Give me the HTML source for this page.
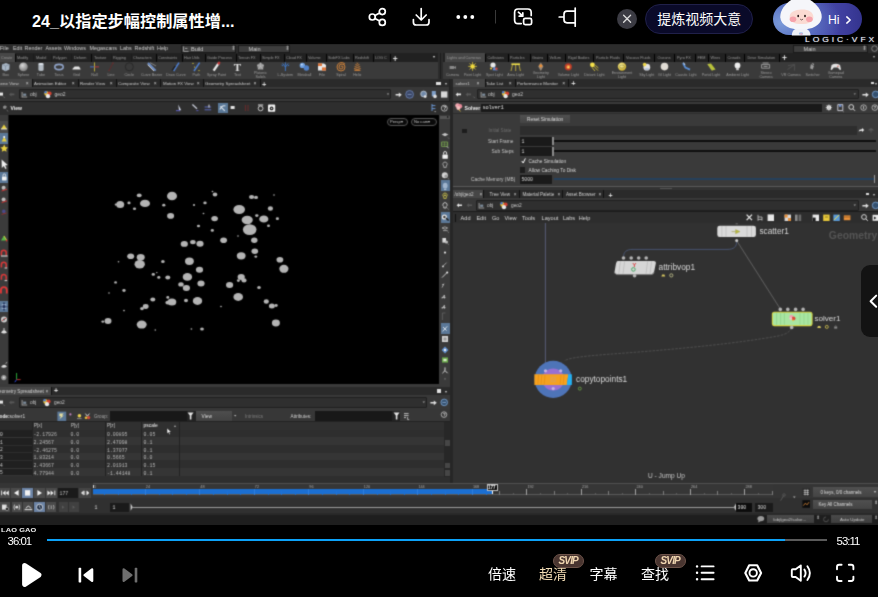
<!DOCTYPE html><html lang="zh"><head><meta charset="utf-8"><title>player</title><style>
*{margin:0;padding:0;box-sizing:border-box}
html,body{width:878px;height:597px;overflow:hidden;background:#000;font-family:"Liberation Sans","Noto Sans CJK SC",sans-serif;}
.a{position:absolute}
#root{position:relative;width:878px;height:597px;background:#000;overflow:hidden}
.t{position:absolute;white-space:nowrap;line-height:1}
#h{position:absolute;left:0;top:0;width:878px;height:525px;overflow:hidden;filter:url(#vb)}
#h .t{color:#bdbdbd;font-size:5.2px}
svg{position:absolute;overflow:visible;left:0;top:0}
.m{font-family:"Liberation Mono",monospace}
</style></head><body><div id="root">
<svg width="0" height="0" style="position:absolute"><defs><filter id="vb" x="0" y="0" width="1" height="1" color-interpolation-filters="sRGB"><feConvolveMatrix order="3" kernelMatrix="0.0277 0.1110 0.0277 0.1110 0.4452 0.1110 0.0277 0.1110 0.0277" edgeMode="duplicate" preserveAlpha="true"/></filter></defs></svg>
<div id="h">
<div class="a" style="left:0px;top:44px;width:878px;height:481px;background:#222;"></div>
<div class="a" style="left:0px;top:44px;width:878px;height:9.2px;background:#2c2c2c;"></div>
<div class="t" style="left:0px;top:45.97px;font-size:5.4px;color:#cccccc;">File</div>
<div class="t" style="left:13px;top:45.97px;font-size:5.4px;color:#cccccc;">Edit</div>
<div class="t" style="left:24.5px;top:45.97px;font-size:5.4px;color:#cccccc;">Render</div>
<div class="t" style="left:45.5px;top:45.97px;font-size:5.4px;color:#cccccc;">Assets</div>
<div class="t" style="left:64px;top:45.97px;font-size:5.4px;color:#cccccc;">Windows</div>
<div class="t" style="left:89.5px;top:45.97px;font-size:5.4px;color:#cccccc;">Megascans</div>
<div class="t" style="left:120px;top:45.97px;font-size:5.4px;color:#cccccc;">Labs</div>
<div class="t" style="left:134.5px;top:45.97px;font-size:5.4px;color:#cccccc;">Redshift</div>
<div class="t" style="left:157px;top:45.97px;font-size:5.4px;color:#cccccc;">Help</div>
<div class="a" style="left:181px;top:44.6px;width:55px;height:8.2px;background:#3d3d3d;border:0.5px solid #1a1a1a"></div>
<svg width="878" height="100" viewBox="0 0 878 100" fill="none" stroke="#ccc" stroke-width="0.7"><path d="M183.6 46.4 V51.4 H188.6 M185 48.4 H187.4"/><path d="M241 48.8 a2.4 2 0 1 0 4.8 0 a2.4 2 0 1 0 -4.8 0 M242.4 48.8 h2"/><path d="M796 46.6 l1 4 l1.2 -3 l1.2 3 l1 -4"/></svg>
<div class="t" style="left:191px;top:47.04px;font-size:5.6px;color:#cfcfcf;">Build</div>
<div class="t" style="left:231px;top:46.34px;font-size:5.6px;color:#999;">⬍</div>
<div class="a" style="left:237.5px;top:44.6px;width:52px;height:8.2px;background:#3d3d3d;border:0.5px solid #1a1a1a"></div>
<div class="t" style="left:248.5px;top:47.04px;font-size:5.6px;color:#cfcfcf;">Main</div>
<div class="t" style="left:285px;top:46.34px;font-size:5.6px;color:#999;">⬍</div>
<div class="a" style="left:793px;top:44.6px;width:75px;height:8.2px;background:#3d3d3d;border:0.5px solid #1a1a1a"></div>
<div class="t" style="left:803.5px;top:47.04px;font-size:5.6px;color:#cfcfcf;">Main</div>
<div class="t" style="left:862px;top:46.34px;font-size:5.6px;color:#999;">⬍</div>
<svg width="878" height="100" viewBox="0 0 878 100" fill="none" stroke="#bbb" stroke-width="0.6"><circle cx="874.5" cy="48.6" r="2.8"/></svg>
<div class="a" style="left:0px;top:53.2px;width:878px;height:8.4px;background:#212121;"></div>
<div class="a" style="left:0px;top:53.4px;width:14.5px;height:8.2px;background:#474747;"></div>
<div class="t" style="left:1px;top:56.62px;font-size:3.8px;color:#969696;">Create</div>
<div class="t" style="left:17px;top:56.62px;font-size:3.8px;color:#969696;">Modify</div>
<div class="t" style="left:36px;top:56.62px;font-size:3.8px;color:#969696;">Model</div>
<div class="t" style="left:53px;top:56.62px;font-size:3.8px;color:#969696;">Polygon</div>
<div class="t" style="left:74px;top:56.62px;font-size:3.8px;color:#969696;">Deform</div>
<div class="t" style="left:94px;top:56.62px;font-size:3.8px;color:#969696;">Texture</div>
<div class="t" style="left:113px;top:56.62px;font-size:3.8px;color:#969696;">Rigging</div>
<div class="t" style="left:133px;top:56.62px;font-size:3.8px;color:#969696;">Characters</div>
<div class="t" style="left:158px;top:56.62px;font-size:3.8px;color:#969696;">Constraints</div>
<div class="t" style="left:184px;top:56.62px;font-size:3.8px;color:#969696;">Hair Utils</div>
<div class="t" style="left:207px;top:56.62px;font-size:3.8px;color:#969696;">Guide Process</div>
<div class="t" style="left:238px;top:56.62px;font-size:3.8px;color:#969696;">Terrain FX</div>
<div class="t" style="left:262px;top:56.62px;font-size:3.8px;color:#969696;">Simple FX</div>
<div class="t" style="left:286px;top:56.62px;font-size:3.8px;color:#969696;">Cloud FX</div>
<div class="t" style="left:308px;top:56.62px;font-size:3.8px;color:#969696;">Volume</div>
<div class="t" style="left:328px;top:56.62px;font-size:3.8px;color:#969696;">SideFX Labs</div>
<div class="t" style="left:355px;top:56.62px;font-size:3.8px;color:#969696;">Redshift</div>
<div class="t" style="left:375px;top:56.62px;font-size:3.8px;color:#969696;">LOG C</div>
<div class="a" style="left:14.5px;top:53.6px;width:0.7px;height:8px;background:#050505;"></div>
<div class="a" style="left:33px;top:53.6px;width:0.7px;height:8px;background:#1b1b1b;"></div>
<div class="a" style="left:50.5px;top:53.6px;width:0.7px;height:8px;background:#1b1b1b;"></div>
<div class="a" style="left:71px;top:53.6px;width:0.7px;height:8px;background:#1b1b1b;"></div>
<div class="a" style="left:91px;top:53.6px;width:0.7px;height:8px;background:#050505;"></div>
<div class="a" style="left:110.5px;top:53.6px;width:0.7px;height:8px;background:#1b1b1b;"></div>
<div class="a" style="left:130.5px;top:53.6px;width:0.7px;height:8px;background:#1b1b1b;"></div>
<div class="a" style="left:155.5px;top:53.6px;width:0.7px;height:8px;background:#050505;"></div>
<div class="a" style="left:181.5px;top:53.6px;width:0.7px;height:8px;background:#050505;"></div>
<div class="a" style="left:204.5px;top:53.6px;width:0.7px;height:8px;background:#050505;"></div>
<div class="a" style="left:235.5px;top:53.6px;width:0.7px;height:8px;background:#050505;"></div>
<div class="a" style="left:260px;top:53.6px;width:0.7px;height:8px;background:#050505;"></div>
<div class="a" style="left:283.5px;top:53.6px;width:0.7px;height:8px;background:#050505;"></div>
<div class="a" style="left:305.5px;top:53.6px;width:0.7px;height:8px;background:#050505;"></div>
<div class="a" style="left:325.5px;top:53.6px;width:0.7px;height:8px;background:#050505;"></div>
<div class="a" style="left:352.5px;top:53.6px;width:0.7px;height:8px;background:#050505;"></div>
<div class="a" style="left:372.5px;top:53.6px;width:0.7px;height:8px;background:#050505;"></div>
<div class="a" style="left:389.5px;top:53.6px;width:0.7px;height:8px;background:#050505;"></div>
<div class="t" style="left:392.8px;top:54.71px;font-size:8.4px;color:#e0e0e0;font-weight:bold;">+</div>
<div class="t" style="left:432.5px;top:55.39px;font-size:4px;color:#ddd;">▾</div>
<div class="a" style="left:444.5px;top:53.4px;width:40.6px;height:8.2px;background:#474747;"></div>
<div class="t" style="left:447px;top:56.62px;font-size:3.8px;color:#969696;">Lights and Cameras</div>
<div class="t" style="left:487.6px;top:56.62px;font-size:3.8px;color:#969696;">Collisions</div>
<div class="t" style="left:510px;top:56.62px;font-size:3.8px;color:#969696;">Particles</div>
<div class="t" style="left:532px;top:56.62px;font-size:3.8px;color:#969696;">Grains</div>
<div class="t" style="left:549.5px;top:56.62px;font-size:3.8px;color:#969696;">Vellum</div>
<div class="t" style="left:568px;top:56.62px;font-size:3.8px;color:#969696;">Rigid Bodies</div>
<div class="t" style="left:596px;top:56.62px;font-size:3.8px;color:#969696;">Particle Fluids</div>
<div class="t" style="left:626px;top:56.62px;font-size:3.8px;color:#969696;">Viscous Fluids</div>
<div class="t" style="left:657.5px;top:56.62px;font-size:3.8px;color:#969696;">Oceans</div>
<div class="t" style="left:677px;top:56.62px;font-size:3.8px;color:#969696;">Pyro FX</div>
<div class="t" style="left:697.5px;top:56.62px;font-size:3.8px;color:#969696;">FEM</div>
<div class="t" style="left:710.5px;top:56.62px;font-size:3.8px;color:#969696;">Wires</div>
<div class="t" style="left:727.5px;top:56.62px;font-size:3.8px;color:#969696;">Crowds</div>
<div class="t" style="left:747.5px;top:56.62px;font-size:3.8px;color:#969696;">Drive Simulation</div>
<div class="a" style="left:485.2px;top:53.6px;width:0.6px;height:8px;background:#000;"></div>
<div class="a" style="left:507.5px;top:53.6px;width:0.6px;height:8px;background:#000;"></div>
<div class="a" style="left:529.5px;top:53.6px;width:0.6px;height:8px;background:#000;"></div>
<div class="a" style="left:546.5px;top:53.6px;width:0.6px;height:8px;background:#000;"></div>
<div class="a" style="left:565px;top:53.6px;width:0.6px;height:8px;background:#000;"></div>
<div class="a" style="left:593px;top:53.6px;width:0.6px;height:8px;background:#000;"></div>
<div class="a" style="left:623px;top:53.6px;width:0.6px;height:8px;background:#000;"></div>
<div class="a" style="left:654px;top:53.6px;width:0.6px;height:8px;background:#000;"></div>
<div class="a" style="left:674px;top:53.6px;width:0.6px;height:8px;background:#000;"></div>
<div class="a" style="left:694.5px;top:53.6px;width:0.6px;height:8px;background:#000;"></div>
<div class="a" style="left:707.5px;top:53.6px;width:0.6px;height:8px;background:#000;"></div>
<div class="a" style="left:724.5px;top:53.6px;width:0.6px;height:8px;background:#000;"></div>
<div class="a" style="left:744px;top:53.6px;width:0.6px;height:8px;background:#000;"></div>
<div class="a" style="left:778.5px;top:53.6px;width:0.6px;height:8px;background:#000;"></div>
<div class="t" style="left:782px;top:54.31px;font-size:8.4px;color:#e0e0e0;font-weight:bold;">+</div>
<div class="t" style="left:873px;top:55.39px;font-size:4px;color:#bbb;">▾</div>
<div class="a" style="left:0px;top:61.6px;width:878px;height:17.6px;background:#3a3a3a;"></div>
<div class="a" style="left:438.4px;top:53.2px;width:5px;height:26px;background:#2c2c2c;"></div>
<div class="a" style="left:440.4px;top:53.2px;width:1px;height:26px;background:#1c1c1c;"></div>
<div class="t" style="left:-24.4px;top:74.4px;width:60px;text-align:center;font-size:3.7px;color:#9c9c9c;line-height:3.7px;white-space:normal">Box</div>
<div class="t" style="left:-6.600000000000001px;top:74.4px;width:60px;text-align:center;font-size:3.7px;color:#9c9c9c;line-height:3.7px;white-space:normal">Sphere</div>
<div class="t" style="left:11px;top:74.4px;width:60px;text-align:center;font-size:3.7px;color:#9c9c9c;line-height:3.7px;white-space:normal">Tube</div>
<div class="t" style="left:29px;top:74.4px;width:60px;text-align:center;font-size:3.7px;color:#9c9c9c;line-height:3.7px;white-space:normal">Torus</div>
<div class="t" style="left:46.400000000000006px;top:74.4px;width:60px;text-align:center;font-size:3.7px;color:#9c9c9c;line-height:3.7px;white-space:normal">Grid</div>
<div class="t" style="left:64.5px;top:74.4px;width:60px;text-align:center;font-size:3.7px;color:#9c9c9c;line-height:3.7px;white-space:normal">Null</div>
<div class="t" style="left:81px;top:74.4px;width:60px;text-align:center;font-size:3.7px;color:#9c9c9c;line-height:3.7px;white-space:normal">Line</div>
<div class="t" style="left:99.30000000000001px;top:74.4px;width:60px;text-align:center;font-size:3.7px;color:#9c9c9c;line-height:3.7px;white-space:normal">Circle</div>
<div class="t" style="left:121.6px;top:74.4px;width:60px;text-align:center;font-size:3.7px;color:#9c9c9c;line-height:3.7px;white-space:normal">Curve Bezier</div>
<div class="t" style="left:146px;top:74.4px;width:60px;text-align:center;font-size:3.7px;color:#9c9c9c;line-height:3.7px;white-space:normal">Draw Curve</div>
<div class="t" style="left:166.4px;top:74.4px;width:60px;text-align:center;font-size:3.7px;color:#9c9c9c;line-height:3.7px;white-space:normal">Path</div>
<div class="t" style="left:186.6px;top:74.4px;width:60px;text-align:center;font-size:3.7px;color:#9c9c9c;line-height:3.7px;white-space:normal">Spray Paint</div>
<div class="t" style="left:207.4px;top:74.4px;width:60px;text-align:center;font-size:3.7px;color:#9c9c9c;line-height:3.7px;white-space:normal">Text</div>
<div class="t" style="left:230.5px;top:72.4px;width:60px;text-align:center;font-size:3.7px;color:#9c9c9c;line-height:3.7px;white-space:normal">Platonic<br>Solids</div>
<div class="t" style="left:255.39999999999998px;top:74.4px;width:60px;text-align:center;font-size:3.7px;color:#9c9c9c;line-height:3.7px;white-space:normal">L-System</div>
<div class="t" style="left:274.4px;top:74.4px;width:60px;text-align:center;font-size:3.7px;color:#9c9c9c;line-height:3.7px;white-space:normal">Metaball</div>
<div class="t" style="left:292px;top:74.4px;width:60px;text-align:center;font-size:3.7px;color:#9c9c9c;line-height:3.7px;white-space:normal">File</div>
<div class="t" style="left:311px;top:74.4px;width:60px;text-align:center;font-size:3.7px;color:#9c9c9c;line-height:3.7px;white-space:normal">Spiral</div>
<div class="t" style="left:327.3px;top:74.4px;width:60px;text-align:center;font-size:3.7px;color:#9c9c9c;line-height:3.7px;white-space:normal">Helix</div>
<div class="t" style="left:422.5px;top:74.4px;width:60px;text-align:center;font-size:3.7px;color:#9c9c9c;line-height:3.7px;white-space:normal">Camera</div>
<div class="t" style="left:442.6px;top:74.4px;width:60px;text-align:center;font-size:3.7px;color:#9c9c9c;line-height:3.7px;white-space:normal">Point Light</div>
<div class="t" style="left:464.4px;top:74.4px;width:60px;text-align:center;font-size:3.7px;color:#9c9c9c;line-height:3.7px;white-space:normal">Spot Light</div>
<div class="t" style="left:485.70000000000005px;top:74.4px;width:60px;text-align:center;font-size:3.7px;color:#9c9c9c;line-height:3.7px;white-space:normal">Area Light</div>
<div class="t" style="left:510.79999999999995px;top:72.4px;width:60px;text-align:center;font-size:3.7px;color:#9c9c9c;line-height:3.7px;white-space:normal">Geometry<br>Light</div>
<div class="t" style="left:538.3px;top:74.4px;width:60px;text-align:center;font-size:3.7px;color:#9c9c9c;line-height:3.7px;white-space:normal">Volume Light</div>
<div class="t" style="left:564.4px;top:74.4px;width:60px;text-align:center;font-size:3.7px;color:#9c9c9c;line-height:3.7px;white-space:normal">Distant Light</div>
<div class="t" style="left:592px;top:72.4px;width:60px;text-align:center;font-size:3.7px;color:#9c9c9c;line-height:3.7px;white-space:normal">Environment<br>Light</div>
<div class="t" style="left:616.8px;top:74.4px;width:60px;text-align:center;font-size:3.7px;color:#9c9c9c;line-height:3.7px;white-space:normal">Sky Light</div>
<div class="t" style="left:634.5px;top:74.4px;width:60px;text-align:center;font-size:3.7px;color:#9c9c9c;line-height:3.7px;white-space:normal">GI Light</div>
<div class="t" style="left:656px;top:74.4px;width:60px;text-align:center;font-size:3.7px;color:#9c9c9c;line-height:3.7px;white-space:normal">Caustic Light</div>
<div class="t" style="left:681px;top:74.4px;width:60px;text-align:center;font-size:3.7px;color:#9c9c9c;line-height:3.7px;white-space:normal">Portal Light</div>
<div class="t" style="left:707.5px;top:74.4px;width:60px;text-align:center;font-size:3.7px;color:#9c9c9c;line-height:3.7px;white-space:normal">Ambient Light</div>
<div class="t" style="left:736px;top:72.4px;width:60px;text-align:center;font-size:3.7px;color:#9c9c9c;line-height:3.7px;white-space:normal">Stereo<br>Camera</div>
<div class="t" style="left:761px;top:74.4px;width:60px;text-align:center;font-size:3.7px;color:#9c9c9c;line-height:3.7px;white-space:normal">VR Camera</div>
<div class="t" style="left:782.7px;top:74.4px;width:60px;text-align:center;font-size:3.7px;color:#9c9c9c;line-height:3.7px;white-space:normal">Switcher</div>
<div class="t" style="left:805.8px;top:72.4px;width:60px;text-align:center;font-size:3.7px;color:#9c9c9c;line-height:3.7px;white-space:normal">Gamepad<br>Camera</div>
<svg width="878" height="100" viewBox="0 0 878 100">
<defs><radialGradient id="sph" cx="0.4" cy="0.35" r="0.7"><stop offset="0" stop-color="#d8d8d8"/><stop offset="1" stop-color="#777"/></radialGradient>
<radialGradient id="ysph" cx="0.4" cy="0.35" r="0.7"><stop offset="0" stop-color="#fff6a0"/><stop offset="1" stop-color="#c8a820"/></radialGradient></defs>
<path d="M2 64.4 L6 63 L9.6 64.6 L9.4 69.4 L5.4 71.2 L1.8 69.2 Z" fill="#a9b7c6"/><path d="M2 64.4 L5.6 66 L9.6 64.6 M5.6 66 L5.4 71.2" stroke="#6e7c8c" stroke-width="0.5" fill="none"/>
<circle cx="23.4" cy="66.8" r="4.4" fill="url(#sph)"/>
<path d="M38.4 64 a2.6 1 0 0 1 5.2 0 V70 a2.6 1 0 0 1 -5.2 0 Z" fill="#b4bcc4"/><ellipse cx="41" cy="64" rx="2.6" ry="1" fill="#dde3ea"/>
<ellipse cx="59" cy="67" rx="4.2" ry="2.6" fill="none" stroke="#8fa3c8" stroke-width="1.6"/>
<path d="M72.4 69 L74.6 66.6 H79 L80.6 69 Z" fill="#e6e6e6"/><rect x="72.4" y="69" width="8.2" height="0.9" fill="#999"/>
<path d="M94.5 62.4 V71.4" stroke="#d8c83a" stroke-width="0.8"/><path d="M90 66.9 H94.5" stroke="#4a78d0" stroke-width="0.9"/><path d="M94.5 66.9 H99" stroke="#c83a3a" stroke-width="0.9"/>
<path d="M109 70.6 L113 63" stroke="#6a2626" stroke-width="0.8"/><circle cx="109" cy="70.6" r="0.7" fill="#743030"/><circle cx="113" cy="63" r="0.7" fill="#743030"/>
<circle cx="129.3" cy="66.8" r="4" fill="none" stroke="#242424" stroke-width="0.8"/>
<path d="M148 63 L155.6 70.6" stroke="#6f8fc8" stroke-width="2"/><path d="M147.6 64.6 L154 71" stroke="#e8e8e8" stroke-width="0.9"/><path d="M150 62.6 L156 66" stroke="#ccc" stroke-width="0.5"/>
<path d="M173.6 71 L179 62.6" stroke="#4f7fd0" stroke-width="1.5"/><path d="M172.2 70.4 L175.2 66" stroke="#1a1a1a" stroke-width="1.3"/>
<path d="M194 71 L199.6 62.6" stroke="#4f7fd0" stroke-width="1.5"/><circle cx="193" cy="63.4" r="0.6" fill="#e8d83a"/><circle cx="194.6" cy="67" r="0.6" fill="#e8d83a"/><circle cx="199" cy="70.6" r="0.6" fill="#e8d83a"/>
<path d="M213.6 70.6 L218.6 63.4" stroke="#e8e8e8" stroke-width="2.4"/><path d="M218 64.2 L219.8 62" stroke="#c83a3a" stroke-width="2.2"/>
<text x="237.4" y="71.2" font-family="Liberation Serif,serif" font-size="11" font-weight="bold" fill="#e6e6e6" text-anchor="middle">T</text>
<path d="M260.5 62.6 L264 65 L263 69.4 L258 69.4 L257 65 Z" fill="#9a9a9a"/><path d="M260.5 62.6 L260.5 66.4 L263 69.4 M260.5 66.4 L258 69.4 M257 65 L260.5 66.4 L264 65" stroke="#ccc" stroke-width="0.4" fill="none"/>
<path d="M285.4 71 V66 M285.4 67 L282.6 63.4 M285.4 67 L288.2 63.4 M285.4 65.6 V62.4 M283 66 L281.6 65 M287.8 66 L289.2 65" stroke="#3f7fd8" stroke-width="0.9" fill="none"/>
<circle cx="302.4" cy="65.4" r="2.7" fill="#6fa0e0"/><circle cx="306.4" cy="68" r="2.7" fill="#4f80c8"/><circle cx="301.8" cy="64.6" r="0.9" fill="#cfe0f8"/>
<path d="M318 63.4 H324 L326 65 V70.6 H318 Z" fill="#e8e8e8"/><path d="M318 63.4 H322 V66 H318 Z" fill="#e0763a"/><path d="M322 67.4 H326 V70.6 H322Z" fill="#e0763a"/>
<path d="M341 67 a1 1 0 0 1 2 0 a2 2 0 0 1 -4 0 a3 3 0 0 1 6 0 a4 4 0 0 1 -8 0 a4.6 4.6 0 0 1 8 -3" stroke="#e08a3a" stroke-width="0.9" fill="none"/>
<path d="M354.4 70.4 h6 M354 68.6 q3.4 1.6 6.6 0 M354.6 66.6 q2.8 1.6 5.6 0 M355.4 64.6 q2 1.4 4 0 M356.6 63 q0.8 0.8 1.6 0" stroke="#e08a3a" stroke-width="0.9" fill="none"/>
<!-- right shelf -->
<path d="M449.6 66 h4.4 v3 h-4.4z M454 67 l2 -1 v3 l-2 -1z" fill="#8a8a8a"/>
<circle cx="472.6" cy="66.4" r="2.2" fill="#f6e24a"/><path d="M472.6 62 V70.8 M468.2 66.4 H477 M469.5 63.3 L475.7 69.5 M475.7 63.3 L469.5 69.5" stroke="#f0d83a" stroke-width="0.7"/>
<circle cx="493" cy="65" r="2.6" fill="#e8e8e8"/><path d="M494.4 66.4 L497.8 70.6 L492.4 70.2 Z" fill="#5a8ad8"/><circle cx="496.4" cy="68.8" r="1.2" fill="#d04a3a"/><circle cx="491" cy="68.6" r="1" fill="#f0c83a"/>
<path d="M511.4 63.4 H520 V65 H511.4 Z" fill="#f0e04a"/><path d="M512.4 65 L511 71 M515.7 65 V71 M519 65 L520.4 71" stroke="#e8d040" stroke-width="0.7"/>
<path d="M540.8 62.4 L543.4 66.6 L540.8 71 L538.2 66.6 Z" fill="#9a8a7a"/><circle cx="540.8" cy="65.8" r="1.6" fill="#e8903a"/>
<circle cx="568.3" cy="66.8" r="3.6" fill="#b83a2a"/><circle cx="568.3" cy="67" r="2" fill="#f08a3a"/><circle cx="568.3" cy="67.2" r="0.9" fill="#f8e06a"/>
<circle cx="592.4" cy="64.8" r="2.4" fill="#f6e24a"/><path d="M593.6 66 L598 70.6 M592 67.4 L595 71 M595.4 65.4 L598.4 68" stroke="#f0d83a" stroke-width="0.8"/>
<circle cx="622" cy="66.6" r="4.2" fill="url(#ysph)"/><ellipse cx="622" cy="66.6" rx="2.6" ry="1.6" fill="none" stroke="#6a6a3a" stroke-width="0.5"/>
<circle cx="646.8" cy="67.2" r="3.4" fill="#e4e4e4"/><circle cx="644.6" cy="64.6" r="1.8" fill="#f0d84a"/><path d="M645 69 h4" stroke="#7a9ad0" stroke-width="0.8"/>
<circle cx="664.5" cy="66.6" r="3.8" fill="#e0dcd4"/>
<path d="M683 63 L685.4 67.6 L690 69.6" stroke="#5a90d8" stroke-width="1.8" fill="none"/><path d="M683.6 62.6 l1.4 2.4" stroke="#d8e4f4" stroke-width="0.9"/>
<path d="M707.6 64 L711 63.4 L715.6 69.6 L712 70.6 Z" fill="#b8c23a"/><path d="M707.6 64 L712 70.6" stroke="#e0e05a" stroke-width="0.5"/>
<circle cx="737.5" cy="65.4" r="2.9" fill="#eeeeee"/><path d="M736.2 67.6 h2.6 v2.6 h-2.6z" fill="#cfcfcf"/>
<path d="M761.6 64.6 h8 v3.6 h-8z" fill="none" stroke="#bdbdbd" stroke-width="0.7"/><path d="M762.6 63 h6 M763.6 66.4 h4" stroke="#ddd" stroke-width="0.6"/>
<path d="M787.4 69.6 L794.6 64.6 L794.6 70.6 M788 65.6 L794.6 64.6" stroke="#565656" stroke-width="0.8" fill="none"/>
<path d="M811 64 l3 2 l-1.4 3.6 l-2.6 -1.4 z" fill="#9a9a9a"/><path d="M812.6 63 l1 2" stroke="#ddd" stroke-width="0.7"/>
<path d="M831.6 65 q4.2 -2.6 8.4 0 l1 4.6 q-1 0.8 -2 -0.6 l-1.2 -1.4 h-4 l-1.2 1.4 q-1 1.4 -2 0.6 z" fill="#e4e4e4"/><circle cx="838" cy="66.2" r="0.7" fill="#d04a3a"/>
</svg>
<div class="a" style="left:0px;top:79.2px;width:449.4px;height:8.2px;background:#2a2a2a;"></div>
<div class="a" style="left:0px;top:79.4px;width:31.5px;height:8px;background:#464646;"></div>
<div class="t" style="left:-4.5px;top:81.92px;font-size:4.4px;color:#cccccc;">Scene View</div>
<div class="t" style="left:25.8px;top:81.03px;font-size:5px;color:#ccc;">×</div>
<div class="t" style="left:34px;top:81.92px;font-size:4.4px;color:#cccccc;">Animation Editor</div>
<div class="t" style="left:71.8px;top:81.03px;font-size:5px;color:#ccc;">×</div>
<div class="t" style="left:80px;top:81.92px;font-size:4.4px;color:#cccccc;">Render View</div>
<div class="t" style="left:109.8px;top:81.03px;font-size:5px;color:#ccc;">×</div>
<div class="t" style="left:118px;top:81.92px;font-size:4.4px;color:#cccccc;">Composite View</div>
<div class="t" style="left:153.8px;top:81.03px;font-size:5px;color:#ccc;">×</div>
<div class="t" style="left:163px;top:81.92px;font-size:4.4px;color:#cccccc;">Motion FX View</div>
<div class="t" style="left:196.8px;top:81.03px;font-size:5px;color:#ccc;">×</div>
<div class="t" style="left:205px;top:81.92px;font-size:4.4px;color:#cccccc;">Geometry Spreadsheet</div>
<div class="t" style="left:253.60000000000002px;top:81.03px;font-size:5px;color:#ccc;">×</div>
<div class="a" style="left:31.5px;top:79.4px;width:0.7px;height:8px;background:#111;"></div>
<div class="a" style="left:77.5px;top:79.4px;width:0.7px;height:8px;background:#111;"></div>
<div class="a" style="left:115.5px;top:79.4px;width:0.7px;height:8px;background:#111;"></div>
<div class="a" style="left:160px;top:79.4px;width:0.7px;height:8px;background:#111;"></div>
<div class="a" style="left:202.5px;top:79.4px;width:0.7px;height:8px;background:#111;"></div>
<div class="a" style="left:259.6px;top:79.4px;width:0.7px;height:8px;background:#111;"></div>
<div class="t" style="left:262px;top:81.06px;font-size:7.4px;color:#ddd;font-weight:bold;">+</div>
<div class="a" style="left:436.2px;top:82px;width:4.6px;height:3px;background:#e0e0e0;"></div>
<div class="t" style="left:444.6px;top:81.79px;font-size:4px;color:#ccc;">▾</div>
<div class="a" style="left:452px;top:79.2px;width:426px;height:8.2px;background:#2a2a2a;"></div>
<div class="a" style="left:453px;top:79.4px;width:31.6px;height:8px;background:#464646;"></div>
<div class="t" style="left:455.5px;top:81.92px;font-size:4.4px;color:#cccccc;">solver1</div>
<div class="t" style="left:476.40000000000003px;top:81.03px;font-size:5px;color:#ccc;">×</div>
<div class="t" style="left:486px;top:81.92px;font-size:4.4px;color:#cccccc;">Take List</div>
<div class="t" style="left:508.8px;top:81.03px;font-size:5px;color:#ccc;">×</div>
<div class="t" style="left:517px;top:81.92px;font-size:4.4px;color:#cccccc;">Performance Monitor</div>
<div class="t" style="left:562.3px;top:81.03px;font-size:5px;color:#ccc;">×</div>
<div class="a" style="left:484.6px;top:79.4px;width:0.7px;height:8px;background:#111;"></div>
<div class="a" style="left:514.6px;top:79.4px;width:0.7px;height:8px;background:#111;"></div>
<div class="a" style="left:568px;top:79.4px;width:0.7px;height:8px;background:#111;"></div>
<div class="t" style="left:571.2px;top:80.46px;font-size:7.4px;color:#ddd;font-weight:bold;">+</div>
<div class="a" style="left:870.6px;top:81.6px;width:3.4px;height:2.6px;background:#ddd;"></div>
<div class="t" style="left:875px;top:81.79px;font-size:4px;color:#ccc;">▾</div>
<div class="a" style="left:0px;top:87.4px;width:449.4px;height:13.8px;background:#383838;"></div>
<div class="a" style="left:452px;top:87.4px;width:426px;height:13.8px;background:#383838;"></div>
<div class="a" style="left:449.4px;top:79.2px;width:2.6px;height:22px;background:#222;"></div>
<div class="a" style="left:19px;top:89.2px;width:372px;height:10.2px;background:#2f2f2f;border:0.6px solid #1f1f1f;border-radius:1px"></div>
<div class="a" style="left:477px;top:89.2px;width:382px;height:10.2px;background:#2f2f2f;border:0.6px solid #1f1f1f;border-radius:1px"></div>
<svg width="878" height="110" viewBox="0 0 878 110">
<path d="M0 92.6 h3 v3 h-3z" fill="#e8e8e8"/><path d="M3.4 96.6 l1 1" stroke="#ccc" stroke-width="0.5"/>
<path d="M9 94.4 l2.4 -2 v1.2 h3 v1.6 h-3 v1.2z" fill="#585858"/>
<path d="M21.6 92 h1 v4.4 h4.6 v1 h-5.6z" fill="#9a9a9a"/><rect x="23.2" y="93.6" width="3" height="2.2" fill="#7f8f9f"/>
<circle cx="46.6" cy="93.6" r="2.3" fill="#e8c03a"/><circle cx="49.6" cy="93.4" r="2" fill="#d04030"/><circle cx="48" cy="96.2" r="2.1" fill="#e8e8e8"/><circle cx="45.6" cy="92.2" r="1.2" fill="#4a7ad0"/>
<path d="M386.8 93.6 l1.2 1.4 l1.2 -1.4z" fill="#aaa"/>
<path d="M395.6 94 h3.2 v-1.6 l3 2.4 l-3 2.4 v-1.6 h-3.2z" fill="#e0e0e0"/>
<circle cx="409.6" cy="94.4" r="3.9" fill="#3a4666" stroke="#6f86b8" stroke-width="0.8"/><path d="M407.6 94.4 h4" stroke="#8fa6d0" stroke-width="0.7"/>
<circle cx="423.6" cy="94" r="2.9" fill="#6f88a8" stroke="#cfd8e4" stroke-width="0.7"/><circle cx="425.2" cy="96.6" r="1.4" fill="#e8e8e8"/>
<rect x="431.8" y="91" width="4" height="5.4" fill="#7f9fc8"/><circle cx="435" cy="96.4" r="1.8" fill="#e0e0e0"/>
<!-- right path bar -->
<rect x="441" y="91.4" width="6.4" height="6.2" fill="#d8d8d8"/>
<path d="M455.6 94.4 l2.4 -2 v1.2 h3 v1.6 h-3 v1.2z" fill="#e8e8e8"/><path d="M465.6 94.4 l2.4 -2 v1.2 h3 v1.6 h-3 v1.2z" fill="#585858"/>
<path d="M473.6 96.8 l0.8 0.8" stroke="#ccc" stroke-width="0.5"/>
<path d="M480.6 92 h1 v4.4 h4.6 v1 h-5.6z" fill="#9a9a9a"/><rect x="482.2" y="93.6" width="3" height="2.2" fill="#7f8f9f"/>
<circle cx="504.2" cy="93.6" r="2.3" fill="#e8c03a"/><circle cx="507.2" cy="93.4" r="2" fill="#d04030"/><circle cx="505.6" cy="96.2" r="2.1" fill="#e8e8e8"/><circle cx="503.2" cy="92.2" r="1.2" fill="#4a7ad0"/>
<path d="M853.6 93.4 l1.2 1.4 l1.2 -1.4z" fill="#aaa"/>
<path d="M862.4 94 h3.4 v-1.6 l3 2.4 l-3 2.4 v-1.6 h-3.4z" fill="#e0e0e0"/>
<circle cx="875.6" cy="94.4" r="3.3" fill="#34506e" stroke="#7fa8d8" stroke-width="0.8"/>
</svg>
<div class="t" style="left:30px;top:91.83px;font-size:5px;color:#c8c8c8;">obj</div>
<div class="t" style="left:54.5px;top:91.83px;font-size:5px;color:#c8c8c8;">geo2</div>
<div class="t" style="left:488px;top:91.83px;font-size:5px;color:#c8c8c8;">obj</div>
<div class="t" style="left:512px;top:91.83px;font-size:5px;color:#c8c8c8;">geo2</div>
<div class="a" style="left:0px;top:101.2px;width:450.6px;height:13.4px;background:#2e2e2e;"></div>
<div class="a" style="left:0px;top:100.8px;width:450.6px;height:0.8px;background:#1e1e1e;"></div>
<div class="t" style="left:10.6px;top:106.03px;font-size:5px;color:#f0f0f0;font-weight:bold;">View</div>
<div class="a" style="left:217.8px;top:102.6px;width:9.8px;height:10.6px;background:#5a7897;"></div>
<svg width="878" height="120" viewBox="0 0 878 120">
<path d="M3 106.6 l2 -1.4 l2 1.6 l-1.6 2.2 l-2.2 -0.4z" fill="#8a8a8a"/><path d="M6.6 110 l1.6 1.4" stroke="#aaa" stroke-width="0.5"/>
<path d="M178.2 104.6 l3 5.6 l-1.6 0 l-0.4 1.6 z" fill="#cfd4e4"/><path d="M176 110.6 h4" stroke="#5a5ab8" stroke-width="1.1"/>
<path d="M192.4 104.6 l4.6 4.2" stroke="#c8ccd8" stroke-width="1.3"/><path d="M196.4 110.6 h2" stroke="#5a5ab8" stroke-width="1"/>
<path d="M204.6 107 h6.6 M204.6 109.8 h6.6" stroke="#5a6ac0" stroke-width="1"/><path d="M209 104.6 v3" stroke="#e0e0e0" stroke-width="1"/>
<path d="M219.8 109.6 q2.4 -5 5.6 -3.6 M220.4 106.4 l4.4 4.4" stroke="#dfe6ee" stroke-width="1.1" fill="none"/>
<rect x="230.6" y="106" width="4" height="3" fill="#e4e4e4"/>
<path d="M245.4 105 v6 M248 105 v6" stroke="#6a2a2a" stroke-width="1"/>
<circle cx="260.6" cy="108.4" r="2.4" fill="none" stroke="#c8c8c8" stroke-width="1"/><path d="M258 105 h5.2" stroke="#ddd" stroke-width="1"/>
<rect x="268" y="104.6" width="7.2" height="7.2" rx="0.8" fill="#f2f2f2"/><circle cx="271.6" cy="108.4" r="1.9" fill="#1a1a1a"/><circle cx="271.6" cy="108.4" r="0.7" fill="#eee"/>
<path d="M432 104 v7 M432 105.6 h3.4 M432 108.6 h3.4" stroke="#6f9fe0" stroke-width="0.9" fill="none"/><path d="M434.4 111.6 h1.6" stroke="#ddd" stroke-width="0.6"/>
<circle cx="444.3" cy="108.2" r="3" fill="none" stroke="#e4e4e4" stroke-width="0.7"/>
</svg>
<div class="t" style="left:443.2px;top:106.69px;font-size:4.6px;color:#eee;font-weight:bold;">?</div>
<div class="a" style="left:9px;top:114.6px;width:430px;height:269.4px;background:#000;"></div>
<div class="a" style="left:0px;top:114.6px;width:8.6px;height:269.4px;background:#3b3b3b;"></div>
<div class="a" style="left:8.4px;top:114.6px;width:0.7px;height:269.4px;background:#1a1a1a;"></div>
<div class="a" style="left:0px;top:121.4px;width:8.2px;height:11.2px;background:#4b4b4b;"></div>
<div class="a" style="left:0px;top:133px;width:8.2px;height:11.2px;background:#5b7898;"></div>
<div class="a" style="left:0px;top:171.6px;width:8.2px;height:11px;background:#5b7898;"></div>
<div class="a" style="left:0px;top:301px;width:8.2px;height:11.4px;background:#5b7898;"></div>
<svg width="20" height="400" viewBox="0 0 20 400">
<path d="M1 129 l3 -4.4 l3 4.4z" fill="#e8d040"/><path d="M1 129 h6" stroke="#f4f4f4" stroke-width="0.8"/>
<path d="M1.6 141.6 l2.6 -4.8 l2.6 4.8z" fill="#e8d040"/><circle cx="4.2" cy="137" r="1" fill="#fff"/>
<path d="M4.2 144.6 l1.2 2.4 l2.6 0.4 l-1.9 1.8 l0.5 2.6 l-2.4 -1.3 l-2.4 1.3 l0.5 -2.6 l-1.9 -1.8 l2.6 -0.4z" fill="#e8d040"/>
<path d="M1.6 159.6 l0.2 8.4 l2 -2 l1.6 3 l1.2 -0.7 l-1.5 -2.9 l2.6 -0.4z" fill="#f0f0f0"/>
<rect x="2" y="176.4" width="4.6" height="4" rx="0.6" fill="#f4f4f4"/><path d="M3 176.4 v-1.2 a1.3 1.3 0 0 1 2.6 0 v1.2" stroke="#f4f4f4" stroke-width="0.8" fill="none"/>
<circle cx="3.6" cy="187.8" r="2" fill="#bdbdbd"/><path d="M1.6 191 l5.4 -1.8" stroke="#d03030" stroke-width="1"/>
<circle cx="3.6" cy="199.4" r="2" fill="#bdbdbd"/><path d="M1.6 202.6 l5.4 -1.8" stroke="#d03030" stroke-width="1"/>
<circle cx="3.8" cy="211.4" r="1.8" fill="#4a4a8a"/><path d="M1.6 214.4 l5 -1.4" stroke="#9a3030" stroke-width="0.9"/>
<path d="M1 240.4 l3 -4.8 l3 4.8z" fill="#58b848"/><path d="M4 236 l2.6 4" stroke="#e8d040" stroke-width="0.9"/><circle cx="6.6" cy="240.6" r="0.9" fill="#d03030"/>
<path d="M1.4 255.4 v-2.8 a2.4 2.4 0 0 1 4.8 0 v2.8" stroke="#d83838" stroke-width="1.5" fill="none"/><path d="M1 256 h6.6" stroke="#eee" stroke-width="1"/>
<path d="M1.4 267.4 v-2.8 a2.4 2.4 0 0 1 4.8 0 v2.8" stroke="#d83838" stroke-width="1.5" fill="none"/><path d="M4.6 268 h2.6" stroke="#eee" stroke-width="0.9"/>
<path d="M1.4 279.8 v-2.8 a2.4 2.4 0 0 1 4.8 0 v2.8" stroke="#d83838" stroke-width="1.5" fill="none"/><path d="M4.6 280.6 h2.6" stroke="#eee" stroke-width="0.9"/>
<path d="M1 293.6 v-3.6 a2.9 2.9 0 0 1 5.8 0 v3.6" stroke="#e03838" stroke-width="1.8" fill="none"/>
<path d="M4 302.6 v8 M0.6 306.6 h6.8" stroke="#20305a" stroke-width="1.6"/><path d="M2 304.6 h4 v4 h-4z" fill="none" stroke="#cfe0f8" stroke-width="0.5"/>
<circle cx="4" cy="319.4" r="3" fill="#cfcfcf"/><path d="M2 320.6 l4 -2.4" stroke="#c83030" stroke-width="0.9"/><circle cx="4" cy="319.4" r="1" fill="#555"/>
<path d="M1 332.4 q3 -5 6 0 q-3 2 -6 0z" fill="#e0e0e0"/><circle cx="4" cy="329" r="1.1" fill="#999"/>
<path d="M1 367 q3 -4 6 -0.6 q-3 2.4 -6 0.6z" fill="#dcdcdc"/><path d="M5.6 363.4 l1.6 -1" stroke="#eee" stroke-width="0.7"/>
<circle cx="3.8" cy="377.6" r="2.6" fill="#9a9a9a"/><circle cx="3.8" cy="377.6" r="1" fill="#ddd"/>
</svg>
<svg width="40" height="400" viewBox="0 0 40 400"><path d="M16.6 379.6 V373" stroke="#30c040" stroke-width="0.9"/><path d="M16.6 379.6 H20.6" stroke="#d03030" stroke-width="0.9"/><path d="M16.6 379.6 L14.8 382.2" stroke="#3048e0" stroke-width="1"/></svg>
<div class="a" style="left:387px;top:117.8px;width:21.4px;height:7.8px;background:#0a0a0a;border:0.7px solid #565656;border-radius:4px"></div>
<div class="t" style="left:390px;top:120.27px;font-size:4.1px;color:#c4c4c4;">Persp▾</div>
<div class="a" style="left:411px;top:117.8px;width:25.6px;height:7.8px;background:#0a0a0a;border:0.7px solid #565656;border-radius:4px"></div>
<div class="t" style="left:414px;top:120.27px;font-size:4.1px;color:#c4c4c4;">No cam▾</div>
<div class="a" style="left:439px;top:114.6px;width:11.6px;height:272px;background:#3a3a3a;"></div>
<div class="a" style="left:450.2px;top:79.2px;width:2.8px;height:404px;background:#262626;"></div>
<div class="a" style="left:439.6px;top:115.6px;width:10.4px;height:3px;background:#555;"></div>
<div class="t" style="left:446.6px;top:116.25px;font-size:3.6px;color:#111;">▸</div>
<div class="a" style="left:440.6px;top:180.4px;width:9.4px;height:11px;background:#5b7898;"></div>
<div class="a" style="left:440.6px;top:212.4px;width:9.4px;height:11px;background:#5b7898;"></div>
<svg width="878" height="400" viewBox="0 0 878 400">
<path d="M441.6 134.6 l3.4 -1.6 l3.4 1.6 l-3.4 1.6z" fill="#c8c8c8"/><path d="M448 137.6 l1 1" stroke="#bbb" stroke-width="0.5"/>
<path d="M441.6 142 h6 v4.4 h-6z" fill="none" stroke="#7fb050" stroke-width="0.8"/><path d="M441.6 144.2 h6 M444.6 142 v4.4" stroke="#7fb050" stroke-width="0.5"/><path d="M446.6 146.6 l2 1.2" stroke="#ddd" stroke-width="0.7"/>
<rect x="442.4" y="154.4" width="5.4" height="4.4" rx="0.6" fill="#f2f2f2"/><path d="M443.6 154.4 v-1.4 a1.5 1.5 0 0 1 3 0 v1.4" stroke="#f2f2f2" stroke-width="0.9" fill="none"/>
<path d="M445 162 a2.2 2.2 0 0 1 1.2 4 v1.4 h-2.4 v-1.4 a2.2 2.2 0 0 1 1.2 -4z" fill="none" stroke="#d0d0d0" stroke-width="0.7"/>
<circle cx="444.8" cy="175.2" r="3" fill="#d4d4d4"/><circle cx="446" cy="176.2" r="1.6" fill="#9a9a9a"/><path d="M447.6 178 l1.2 1" stroke="#ccc" stroke-width="0.5"/>
<ellipse cx="445.2" cy="185.8" rx="2.4" ry="3" fill="#9fb4cc"/><path d="M444 189.6 h2.4" stroke="#dfe8f0" stroke-width="0.7"/>
<path d="M445 193 a2.2 2.2 0 0 1 1.2 4 v1.4 h-2.4 v-1.4 a2.2 2.2 0 0 1 1.2 -4z" fill="none" stroke="#d8d050" stroke-width="0.8"/><circle cx="445" cy="195.4" r="0.8" fill="#f0e050"/>
<path d="M445 202.6 a2.2 2.2 0 0 1 1.2 4 v1.4 h-2.4 v-1.4 a2.2 2.2 0 0 1 1.2 -4z" fill="none" stroke="#e4e4e4" stroke-width="0.8"/><path d="M447.4 208.4 l1.2 1" stroke="#ccc" stroke-width="0.5"/>
<circle cx="444.4" cy="217" r="2.6" fill="#e8e8e8"/><path d="M446 218 l2.6 2.6" stroke="#1a1a1a" stroke-width="1.4"/><circle cx="444.4" cy="217" r="1.2" fill="#333"/>
<path d="M442 228 q3 -2.4 5.6 0 q-2 2.4 -5.6 0z M443 230.6 h4.6" stroke="#c8c8c8" stroke-width="0.7" fill="none"/><path d="M447.6 231.6 l1.2 1" stroke="#ccc" stroke-width="0.5"/>
<rect x="442.4" y="238" width="3.6" height="4.6" fill="#dcdcdc"/><circle cx="446.4" cy="242" r="1.6" fill="#bbb"/><path d="M447.6 243.6 l1.2 1" stroke="#ccc" stroke-width="0.5"/>
</svg>
<div class="a" style="left:440.6px;top:323px;width:9.4px;height:11px;background:#5b7898;"></div>
<svg width="878" height="400" viewBox="0 0 878 400">
<circle cx="445" cy="252.6" r="1.1" fill="#e0e0e0"/>
<path d="M442.6 266.6 l4 -4" stroke="#c8c8c8" stroke-width="0.7"/><circle cx="443" cy="266.4" r="0.9" fill="#ddd"/>
<path d="M442 277.6 l5.4 -5.4" stroke="#dcdcdc" stroke-width="0.9"/><circle cx="447.2" cy="272.4" r="1" fill="#eee"/>
<path d="M442 287.6 l2 -4 M442 284.6 h2" stroke="#d0d0d0" stroke-width="0.7"/>
<path d="M442 298.6 l2.4 -3.6 v3.6 M441.6 297.4 h4" stroke="#d8d8d8" stroke-width="0.7" fill="none"/>
<path d="M442 308.8 l2.4 -3.6 v3.6 M441.6 307.6 h4" stroke="#d8d8d8" stroke-width="0.7" fill="none"/>
<path d="M442.4 313 v7 M442.4 313 h3" stroke="#6a6a6a" stroke-width="0.7" fill="none"/>
<path d="M442.6 331.4 l4.6 -5 M443 327 l3.6 3.6" stroke="#e8eef4" stroke-width="0.9"/>
<rect x="442" y="336" width="6" height="6" fill="#d8d8d8"/><rect x="443.4" y="337.4" width="3.2" height="3.2" fill="#9a9a9a"/>
<path d="M445 346.6 l3.4 3.4 l-3.4 3.4 l-3.4 -3.4z" fill="#5f8fd0"/><circle cx="445" cy="350" r="1.2" fill="#f0f0f0"/>
<rect x="442" y="357.4" width="6" height="5.2" fill="#68a848"/><rect x="443.4" y="358.8" width="3.2" height="2.4" fill="#d8e8c8"/>
<path d="M445 370.6 v-3.2 M445 370.6 l-2.6 2.6 M445 370.6 l2.6 2.6" stroke="#e8e8e8" stroke-width="0.9"/>
<circle cx="445" cy="378.8" r="0.9" fill="#6a6a6a"/>
</svg>
<svg width="878" height="597" viewBox="0 0 878 597" fill="#b4b4b4"><ellipse cx="120.2" cy="204.6" rx="4" ry="3.5"/><ellipse cx="115.9" cy="204.6" rx="1.2" ry="1.1"/><ellipse cx="129" cy="202.9" rx="1.6" ry="1.3"/><ellipse cx="139.2" cy="195.4" rx="2.5" ry="1.8"/><ellipse cx="134.5" cy="208.7" rx="1.6" ry="1.3"/><ellipse cx="145" cy="203.4" rx="5" ry="3.7"/><ellipse cx="172" cy="196" rx="5" ry="4.3"/><ellipse cx="163.8" cy="205.2" rx="1.6" ry="1.4"/><ellipse cx="170.6" cy="215.9" rx="3.5" ry="2.8"/><ellipse cx="184.3" cy="243.9" rx="3.6" ry="2.9"/><ellipse cx="192.9" cy="242.1" rx="2.8" ry="2.2"/><ellipse cx="194" cy="205" rx="1.1" ry="1"/><ellipse cx="205" cy="202.9" rx="1.7" ry="1.3"/><ellipse cx="203.5" cy="213.5" rx="0.9" ry="0.8"/><ellipse cx="215" cy="194.5" rx="2.3" ry="1.9"/><ellipse cx="212.5" cy="191.5" rx="0.9" ry="0.8"/><ellipse cx="214.6" cy="218.6" rx="3.3" ry="2.7"/><ellipse cx="239.2" cy="209.5" rx="5.8" ry="4.6"/><ellipse cx="251.6" cy="197" rx="2.6" ry="2"/><ellipse cx="256" cy="197.4" rx="2" ry="1.7"/><ellipse cx="274" cy="195" rx="0.8" ry="0.7"/><ellipse cx="270.4" cy="208.5" rx="2.6" ry="2.2"/><ellipse cx="247.2" cy="220" rx="5.6" ry="4.2"/><ellipse cx="256.8" cy="215.6" rx="1.7" ry="1.4"/><ellipse cx="263.8" cy="219" rx="4.6" ry="3.6"/><ellipse cx="277.4" cy="218.7" rx="1.6" ry="1.4"/><ellipse cx="249.7" cy="229.6" rx="6.8" ry="5.4"/><ellipse cx="268.5" cy="225.7" rx="1.5" ry="1.3"/><ellipse cx="198.5" cy="226" rx="1.6" ry="1.3"/><ellipse cx="212.3" cy="230.4" rx="1.6" ry="1.4"/><ellipse cx="223.6" cy="240.2" rx="3.4" ry="2.8"/><ellipse cx="238" cy="236" rx="0.8" ry="0.7"/><ellipse cx="254.3" cy="240.2" rx="3.2" ry="2.7"/><ellipse cx="200" cy="243.7" rx="3.6" ry="3"/><ellipse cx="241.2" cy="255.8" rx="4.4" ry="3.6"/><ellipse cx="254.8" cy="251.3" rx="3.3" ry="2.7"/><ellipse cx="255.8" cy="256.6" rx="1.4" ry="1.2"/><ellipse cx="130.7" cy="256.3" rx="3.5" ry="2.8"/><ellipse cx="140.7" cy="257.3" rx="4" ry="3.2"/><ellipse cx="139.7" cy="264.3" rx="5.2" ry="4.2"/><ellipse cx="118.5" cy="261.8" rx="0.8" ry="0.7"/><ellipse cx="162.9" cy="261.6" rx="1.8" ry="1.5"/><ellipse cx="156.8" cy="272.6" rx="0.8" ry="0.7"/><ellipse cx="189.4" cy="261.3" rx="4.4" ry="3.7"/><ellipse cx="199.5" cy="269.8" rx="3.6" ry="3"/><ellipse cx="279.9" cy="259.8" rx="3.4" ry="2.8"/><ellipse cx="283.9" cy="268.8" rx="4.6" ry="4"/><ellipse cx="153.3" cy="274.4" rx="1.7" ry="1.4"/><ellipse cx="158.8" cy="277.4" rx="1.6" ry="1.3"/><ellipse cx="167.8" cy="277.4" rx="2.5" ry="2"/><ellipse cx="187.4" cy="276.9" rx="4.7" ry="3.9"/><ellipse cx="115.6" cy="282.4" rx="1.4" ry="1.2"/><ellipse cx="124" cy="290.5" rx="1.7" ry="1.4"/><ellipse cx="109" cy="293" rx="0.8" ry="0.7"/><ellipse cx="181" cy="284.4" rx="2.7" ry="2.2"/><ellipse cx="186.4" cy="288" rx="3.6" ry="3"/><ellipse cx="201" cy="283.4" rx="3.6" ry="3"/><ellipse cx="229.6" cy="285" rx="3.6" ry="3"/><ellipse cx="241.2" cy="276.9" rx="3.6" ry="3"/><ellipse cx="244" cy="280.4" rx="2.6" ry="2.1"/><ellipse cx="259" cy="287.4" rx="1.8" ry="1.5"/><ellipse cx="238.4" cy="280.6" rx="1.5" ry="1.3"/><ellipse cx="238.2" cy="297" rx="4.8" ry="3.9"/><ellipse cx="197.5" cy="301" rx="4.7" ry="3.9"/><ellipse cx="171.9" cy="302" rx="4.4" ry="3.5"/><ellipse cx="167.6" cy="302.6" rx="2.2" ry="1.9"/><ellipse cx="167.8" cy="297.4" rx="1.5" ry="1.3"/><ellipse cx="152.8" cy="299.5" rx="2.5" ry="2.1"/><ellipse cx="145.7" cy="306.5" rx="2.9" ry="2.4"/><ellipse cx="142" cy="308.6" rx="1.9" ry="1.6"/><ellipse cx="124" cy="310.6" rx="0.9" ry="0.8"/><ellipse cx="186" cy="300.5" rx="2" ry="1.7"/><ellipse cx="221" cy="306.5" rx="0.9" ry="0.8"/><ellipse cx="266.3" cy="301.5" rx="2.6" ry="2.2"/><ellipse cx="271.9" cy="306" rx="3" ry="2.5"/><ellipse cx="276.1" cy="305.5" rx="1.6" ry="1.4"/><ellipse cx="108" cy="321" rx="3.5" ry="3"/><ellipse cx="102.8" cy="321.6" rx="1.4" ry="1.2"/><ellipse cx="141.7" cy="324.6" rx="5" ry="4"/><ellipse cx="155.3" cy="330" rx="0.8" ry="0.7"/><ellipse cx="191.4" cy="329" rx="0.9" ry="0.8"/><ellipse cx="202" cy="329" rx="1.9" ry="1.5"/><ellipse cx="275.9" cy="323" rx="4" ry="3.4"/></svg>
<div class="a" style="left:453px;top:101.2px;width:425px;height:86px;background:#3a3a3a;"></div>
<div class="a" style="left:453px;top:101px;width:425px;height:0.8px;background:#1e1e1e;"></div>
<div class="a" style="left:453px;top:113.4px;width:425px;height:0.6px;background:#2c2c2c;"></div>
<div class="a" style="left:480.6px;top:104.2px;width:341.6px;height:7.6px;background:#191919;"></div>
<div class="t" style="left:464.6px;top:105.72px;font-size:5.1px;color:#f4f4f4;font-weight:bold;">Solver</div>
<div class="t m" style="left:482.4px;top:105.97px;font-size:5.4px;color:#e0e0e0;letter-spacing:-0.2px;">solver1</div>
<svg width="878" height="200" viewBox="0 0 878 200">
<circle cx="457.6" cy="105.6" r="2.4" fill="#f0a8b0"/><circle cx="460" cy="106.2" r="2.2" fill="#e88898"/><circle cx="458.4" cy="108" r="2" fill="#f4c0c0"/><path d="M459 109.6 l1.4 1.8" stroke="#e8c040" stroke-width="0.9"/>
<circle cx="828.9" cy="107.6" r="1.8" fill="none" stroke="#eee" stroke-width="1.2"/><path d="M828.9 104.4 v6.4 M825.7 107.6 h6.4 M826.6 105.3 l4.6 4.6 M831.2 105.3 l-4.6 4.6" stroke="#eee" stroke-width="0.6"/>
<path d="M837.8 104.6 h5 v6 h-5z" fill="none" stroke="#e8e8f4" stroke-width="0.8"/><rect x="839" y="104.6" width="2.4" height="2.2" fill="#6f8fd0"/><path d="M842.6 111 l1.2 1" stroke="#ccc" stroke-width="0.5"/>
<circle cx="851.2" cy="107" r="2.4" fill="none" stroke="#e4e4e4" stroke-width="0.9"/><path d="M853 108.8 l2 2" stroke="#e4e4e4" stroke-width="1"/>
<circle cx="863.6" cy="107.6" r="2.8" fill="none" stroke="#d8d8d8" stroke-width="0.7"/><path d="M863.6 106 v3.2" stroke="#d8d8d8" stroke-width="0.8"/>
<circle cx="874.8" cy="107.6" r="2.8" fill="none" stroke="#d8d8d8" stroke-width="0.7"/>
<path d="M858.6 131.6 q0.4 -2.6 3.4 -2.4 v-1.2 l2.2 2 l-2.2 2 v-1.2 q-1.6 -0.2 -3.4 0.8z" fill="#f0f0f0"/>
<path d="M868.6 130 q2.4 -3 4.8 0z M871 130 v2.6" stroke="#5a5a5a" stroke-width="0.8" fill="#555"/>
<path d="M521.8 161 l1.4 2 l2.2 -4.6" stroke="#fff" stroke-width="1" fill="none"/>
</svg>
<div class="t" style="left:873.6px;top:106.32px;font-size:4.4px;color:#ddd;font-weight:bold;">?</div>
<div class="a" style="left:520px;top:114.8px;width:50px;height:8.2px;background:linear-gradient(#505050,#444);"></div>
<div class="t" style="left:527px;top:117.66px;font-size:4.8px;color:#dcdcdc;">Reset Simulation</div>
<div class="a" style="left:462px;top:128.6px;width:4.6px;height:4.6px;background:#1c1c1c;"></div>
<div class="t" style="left:488.6px;top:129.49px;font-size:4.6px;color:#6c6c6c;">Initial State</div>
<div class="a" style="left:520px;top:126.2px;width:337.4px;height:8.6px;background:#2d2d2d;"></div>
<div class="t" style="left:488px;top:140.06px;font-size:4.8px;color:#c4c4c4;">Start Frame</div>
<div class="a" style="left:519.8px;top:136.8px;width:31.8px;height:8.8px;background:#1a1a1a;"></div>
<div class="t m" style="left:521.4px;top:140.06px;font-size:4.8px;color:#d8d8d8;">1</div>
<div class="a" style="left:552px;top:137px;width:1.8px;height:8.4px;background:#8c8c8c;"></div>
<div class="a" style="left:554px;top:140.1px;width:321.6px;height:1.5px;background:#0e0e0e;"></div>
<div class="t" style="left:491.6px;top:150.26px;font-size:4.8px;color:#c4c4c4;">Sub Steps</div>
<div class="a" style="left:519.8px;top:147.2px;width:31.8px;height:8.8px;background:#1a1a1a;"></div>
<div class="t m" style="left:521.4px;top:150.46px;font-size:4.8px;color:#d8d8d8;">1</div>
<div class="a" style="left:552px;top:147.4px;width:1.8px;height:8.4px;background:#8c8c8c;"></div>
<div class="a" style="left:554px;top:150.3px;width:321.6px;height:1.5px;background:#0e0e0e;"></div>
<div class="t" style="left:528.6px;top:159.86px;font-size:4.8px;color:#d4d4d4;">Cache Simulation</div>
<div class="a" style="left:520px;top:167.4px;width:5.4px;height:5.4px;background:#1c1c1c;"></div>
<div class="t" style="left:528.6px;top:168.86px;font-size:4.8px;color:#d4d4d4;">Allow Caching To Disk</div>
<div class="t" style="left:471px;top:178.26px;font-size:4.8px;color:#c4c4c4;">Cache Memory (MB)</div>
<div class="a" style="left:519.8px;top:175px;width:31.8px;height:8.8px;background:#1a1a1a;"></div>
<div class="t m" style="left:521.4px;top:178.26px;font-size:4.8px;color:#d8d8d8;">5000</div>
<div class="a" style="left:554px;top:177.6px;width:320px;height:2.2px;background:#25405c;"></div>
<div class="a" style="left:873.6px;top:174.6px;width:1.6px;height:8.6px;background:#9a9a9a;"></div>
<div class="a" style="left:453px;top:185.8px;width:425px;height:0.8px;background:#5a5a5a;"></div>
<div class="a" style="left:453px;top:186.6px;width:425px;height:3.4px;background:#333;"></div>
<div class="a" style="left:660px;top:187.6px;width:12.4px;height:1.6px;background:#555;"></div>
<div class="a" style="left:453px;top:190px;width:425px;height:8px;background:#2a2a2a;"></div>
<div class="a" style="left:453px;top:190.2px;width:29.6px;height:7.8px;background:#464646;"></div>
<div class="t" style="left:454.6px;top:192.69px;font-size:4.6px;color:#d0d0d0;">/obj/geo2</div>
<div class="t" style="left:479.40000000000003px;top:193.26px;font-size:4.8px;color:#ccc;">×</div>
<div class="t" style="left:489.6px;top:192.69px;font-size:4.6px;color:#d0d0d0;">Tree View</div>
<div class="t" style="left:513.8px;top:193.26px;font-size:4.8px;color:#ccc;">×</div>
<div class="t" style="left:522.4px;top:192.69px;font-size:4.6px;color:#d0d0d0;">Material Palette</div>
<div class="t" style="left:557.4px;top:193.26px;font-size:4.8px;color:#ccc;">×</div>
<div class="t" style="left:566px;top:192.69px;font-size:4.6px;color:#d0d0d0;">Asset Browser</div>
<div class="t" style="left:598.4px;top:193.26px;font-size:4.8px;color:#ccc;">×</div>
<div class="a" style="left:482.6px;top:190.2px;width:0.7px;height:7.8px;background:#111;"></div>
<div class="a" style="left:518.6px;top:190.2px;width:0.7px;height:7.8px;background:#111;"></div>
<div class="a" style="left:562px;top:190.2px;width:0.7px;height:7.8px;background:#111;"></div>
<div class="a" style="left:603.4px;top:190.2px;width:0.7px;height:7.8px;background:#111;"></div>
<div class="t" style="left:608.4px;top:191.53px;font-size:7px;color:#ddd;font-weight:bold;">+</div>
<div class="a" style="left:866px;top:192.6px;width:3.4px;height:2.6px;background:#ddd;"></div>
<div class="t" style="left:873px;top:192.59px;font-size:4px;color:#ccc;">▾</div>
<div class="a" style="left:453px;top:198px;width:425px;height:13.6px;background:#383838;"></div>
<div class="a" style="left:476px;top:200.2px;width:382.6px;height:10.4px;background:#2f2f2f;border:0.6px solid #1f1f1f;border-radius:1px"></div>
<svg width="878" height="230" viewBox="0 0 878 230">
<path d="M456.6 205.2 l2.4 -2 v1.2 h3 v1.6 h-3 v1.2z" fill="#e8e8e8"/>
<path d="M466.6 205.2 l2.4 -2 v1.2 h3 v1.6 h-3 v1.2z" fill="#585858"/>
<path d="M478.6 203 h1 v4.4 h4.6 v1 h-5.6z" fill="#9a9a9a"/><rect x="480.2" y="204.6" width="3" height="2.2" fill="#7f8f9f"/>
<circle cx="502.6" cy="204.6" r="2.3" fill="#e8c03a"/><circle cx="505.6" cy="204.4" r="2" fill="#d04030"/><circle cx="504" cy="207.2" r="2.1" fill="#e8e8e8"/><circle cx="501.6" cy="203.2" r="1.2" fill="#4a7ad0"/>
<path d="M853.6 204.6 l1.2 1.4 l1.2 -1.4z" fill="#aaa"/>
<path d="M862.4 205 h3.4 v-1.6 l3 2.4 l-3 2.4 v-1.6 h-3.4z" fill="#e0e0e0"/>
<circle cx="875.6" cy="205.4" r="3.3" fill="#34506e" stroke="#7fa8d8" stroke-width="0.8"/>
</svg>
<div class="t" style="left:487px;top:204.06px;font-size:4.8px;color:#c8c8c8;">obj</div>
<div class="t" style="left:511px;top:204.06px;font-size:4.8px;color:#c8c8c8;">geo2</div>
<div class="a" style="left:453px;top:211.6px;width:425px;height:11.4px;background:#2d2d2d;"></div>
<div class="a" style="left:453px;top:211.4px;width:425px;height:0.7px;background:#1c1c1c;"></div>
<div class="a" style="left:454.6px;top:213.6px;width:1.6px;height:8px;background:#111;"></div>
<div class="t" style="left:460.6px;top:215.94px;font-size:5.6px;color:#d8d8d8;">Add</div>
<div class="t" style="left:476.4px;top:215.94px;font-size:5.6px;color:#d8d8d8;">Edit</div>
<div class="t" style="left:492px;top:215.94px;font-size:5.6px;color:#d8d8d8;">Go</div>
<div class="t" style="left:504.6px;top:215.94px;font-size:5.6px;color:#d8d8d8;">View</div>
<div class="t" style="left:522px;top:215.94px;font-size:5.6px;color:#d8d8d8;">Tools</div>
<div class="t" style="left:541.6px;top:215.94px;font-size:5.6px;color:#d8d8d8;">Layout</div>
<div class="t" style="left:563px;top:215.94px;font-size:5.6px;color:#d8d8d8;">Labs</div>
<div class="t" style="left:578.8px;top:215.94px;font-size:5.6px;color:#d8d8d8;">Help</div>
<svg width="878" height="230" viewBox="0 0 878 230">
<path d="M746.6 214.6 l5.4 5.6 M752 214.6 l-5.4 5.6" stroke="#f0f0f0" stroke-width="1.2"/>
<path d="M758 214.8 v6 M758 217 h4 v3.6 M758 219.4 h4" stroke="#c8c8c8" stroke-width="0.8" fill="none"/>
<rect x="767.6" y="214.4" width="6.4" height="6.6" fill="#e8e8e8"/>
<rect x="784.6" y="214.6" width="6.4" height="6.4" fill="#d8d8d8"/><rect x="784.6" y="214.6" width="3" height="3" fill="#e8903a"/><rect x="788" y="218" width="3" height="3" fill="#e8903a"/>
<rect x="795" y="214.6" width="2.6" height="6.4" fill="#8a8a8a"/><rect x="798.6" y="214.6" width="2.6" height="6.4" fill="#6a6a6a"/>
<rect x="812.6" y="214.6" width="6.4" height="6.4" fill="#e8e8e8"/><rect x="812.6" y="217.6" width="3" height="3.4" fill="#1a1a1a"/>
<rect x="823.2" y="214.6" width="6.4" height="6.4" fill="#e8c83a"/><path d="M825 217 h3" stroke="#6a5a1a" stroke-width="0.7"/>
<rect x="833.4" y="214.6" width="6.4" height="6.4" fill="#5a9ad8"/><path d="M834 220 l5 -5" stroke="#e8d84a" stroke-width="1"/>
<rect x="843.8" y="215.4" width="6.6" height="4.8" fill="#e8903a"/><path d="M843.8 217 h6.6" stroke="#7a4a1a" stroke-width="0.6"/>
<circle cx="864" cy="217" r="2.4" fill="none" stroke="#e8e8e8" stroke-width="0.9"/><path d="M865.8 218.8 l2 2" stroke="#e8e8e8" stroke-width="1"/>
<rect x="872.6" y="214.8" width="5.4" height="6" fill="#e8e8e8"/><path d="M874 216.6 l2.4 1.4 l-2.4 1.4z" fill="#1a1a1a"/>
</svg>
<div class="a" style="left:453px;top:223px;width:425px;height:260px;background:#313131;"></div>
<div class="t" style="left:828.8px;top:230.6px;font-size:10.4px;color:#555;font-weight:bold;">Geometry</div>
<svg width="878" height="500" viewBox="0 0 878 500" fill="none">
<path d="M545.4 223 V371" stroke="#687094" stroke-width="0.7"/>
<path d="M736.7 241 C736.7 247 734 249.4 727 249.4 H633 C626 249.4 623.5 252 623.5 257.4" stroke="#4c5c80" stroke-width="0.8"/>
<path d="M736.9 241 L780.3 309" stroke="#6e6e6e" stroke-width="0.8"/>
<path d="M791.6 327.6 C790 332 786 334.4 778 336 C740 343 680 349 620 353.4 C590 355.6 568 357.4 564.4 361" stroke="#5a5a5a" stroke-width="0.7" stroke-dasharray="2.6 1.2"/>
<!-- scatter1 -->
<rect x="717.3" y="225.7" width="38.6" height="11.4" rx="2.4" fill="#dadada"/>
<path d="M721.9 226 v10.8 M726 226 v10.8 M747 226 v10.8 M751.5 226 v10.8" stroke="#b4b4b4" stroke-width="0.6"/>
<path d="M731.6 231.6 h4 v-2 l4.4 2 l-4.4 2.2 v-2.2z" fill="#b8b840" stroke="#8a8a30" stroke-width="0.3"/>
<path d="M735.6 223.8 h2.2" stroke="#999" stroke-width="0.6"/>
<circle cx="736.7" cy="240.4" r="1.5" fill="#c8c8c8"/>
<!-- attribvop1 -->
<path d="M617.6 261 H653.6 Q656.4 261 655.8 263.6 L654.2 271.6 Q653.6 274.2 650.8 274.2 H616.8 Q614 274.2 614.6 271.6 L616 263.6 Q616.6 261 617.6 261Z" fill="#d6d6d6"/>
<path d="M615 272.6 Q615.4 274.6 617.6 274.6 H651 Q653.6 274.6 654.2 272.4" stroke="#8a8a8a" stroke-width="0.8"/>
<path d="M620.4 261.4 l-1.6 12.4 M624.6 261.4 l-1.6 12.4 M647.6 261.4 l-1.6 12.4 M651.6 261.4 l-1.6 12.4" stroke="#b0b0b0" stroke-width="0.6"/>
<path d="M632.8 263 l1.6 2 l1.6 -2 M634.4 265 v2" stroke="#d83a3a" stroke-width="0.9"/>
<circle cx="633.4" cy="269.4" r="1.8" stroke="#38a058" stroke-width="0.9"/>
<circle cx="623.5" cy="258" r="1.8" fill="#b4b4b4"/><circle cx="631.2" cy="258" r="1.8" fill="#b4b4b4"/><circle cx="638.7" cy="258" r="1.8" fill="#b4b4b4"/><circle cx="646.2" cy="258" r="1.8" fill="#b4b4b4"/>
<circle cx="634.6" cy="275.8" r="1.8" fill="#b4b4b4"/>
<path d="M661.4 276.6 h3.8 l-0.8 -2 h-2.2z" fill="#d8c860"/><circle cx="671.3" cy="275.4" r="1.6" stroke="#e0e0a0" stroke-width="0.7"/>
<!-- solver1 -->
<rect x="772.4" y="312.2" width="39.6" height="13.4" rx="2" fill="#a9e6a2" stroke="#d6d848" stroke-width="1.1"/>
<path d="M776.6 313 v11.8 M780.6 313 v11.8 M784.4 313 v11.8 M800 313 v11.8 M804 313 v11.8 M808 313 v11.8" stroke="#8cd088" stroke-width="0.7"/>
<circle cx="791.4" cy="316.8" r="2" fill="#f0a0b0"/><circle cx="793.6" cy="318.4" r="1.9" fill="#d84838"/><circle cx="790.8" cy="318.6" r="1.4" fill="#f4c0c8"/><circle cx="793" cy="320.4" r="0.8" fill="#e8c840"/>
<circle cx="780.3" cy="309.4" r="1.8" fill="#b4b4b4"/><circle cx="787.8" cy="309.4" r="1.8" fill="#b4b4b4"/><circle cx="795.6" cy="309.4" r="1.8" fill="#b4b4b4"/><circle cx="803.1" cy="309.4" r="1.8" fill="#b4b4b4"/>
<circle cx="791.7" cy="327.4" r="1.8" fill="#b4b4b4"/>
<path d="M817.2 328 h3.8 l-0.8 -2 h-2.2z" fill="#d8c860"/><circle cx="826.8" cy="326.9" r="1.5" stroke="#d8c850" stroke-width="0.8"/><rect x="834.2" y="326.6" width="3" height="2" fill="#8a8a8a"/><path d="M834.8 326.6 a0.9 0.9 0 0 1 1.8 0" stroke="#8a8a8a" stroke-width="0.5"/>
<!-- copytopoints1 -->
<circle cx="553.2" cy="379.4" r="18.6" fill="#4e74b8"/>
<circle cx="553.2" cy="379.4" r="11" fill="#9870d2"/>
<path d="M534.4 374.3 H568.4 L566.8 385 H534.4Z" fill="#f5a11f"/>
<path d="M568.4 374.3 H571.8 V385 H566.8Z" fill="#22b2f2"/>
<path d="M538.6 375 l-0.8 9.4 M541.8 375 l-0.8 9.4 M545 375 l-0.8 9.4 M561 375 l-0.8 9.4 M564 375 l-0.8 9.4" stroke="#e08a10" stroke-width="0.6"/>
<circle cx="553.2" cy="379.6" r="2.4" stroke="#d8a060" stroke-width="0.7"/><path d="M550 376.6 l6.4 6 M556.4 376.6 l-6.4 6" stroke="#d8a060" stroke-width="0.6"/>
<circle cx="545.5" cy="370.8" r="1.6" fill="#c4b4e4"/><circle cx="560.7" cy="370.8" r="1.6" fill="#c4b4e4"/><circle cx="553.2" cy="388.6" r="1.6" fill="#c4b4e4"/>
<circle cx="579.8" cy="388.6" r="1.5" stroke="#78b848" stroke-width="0.7"/>
</svg>
<div class="t" style="left:759.4px;top:227.23px;font-size:8.3px;color:#d8d8d8;">scatter1</div>
<div class="t" style="left:658.6px;top:263.03px;font-size:8.3px;color:#d8d8d8;">attribvop1</div>
<div class="t" style="left:814.4px;top:315.06px;font-size:8.1px;color:#d8d8d8;">solver1</div>
<div class="t" style="left:576px;top:375.23px;font-size:8.3px;color:#d8d8d8;">copytopoints1</div>
<div class="t" style="left:648px;top:473.39px;font-size:6.6px;color:#c4c4c4;">U - Jump Up</div>
<div class="a" style="left:0px;top:384px;width:449.8px;height:3.2px;background:#3a3a3a;"></div>
<div class="a" style="left:0px;top:387px;width:449.8px;height:8.2px;background:#2a2a2a;"></div>
<div class="a" style="left:0px;top:387.2px;width:50.6px;height:8px;background:#464646;"></div>
<div class="t" style="left:-4.6px;top:389.98px;font-size:4.7px;color:#d0d0d0;">Geometry Spreadsheet</div>
<div class="t" style="left:45.4px;top:389.66px;font-size:4.8px;color:#ccc;">×</div>
<div class="a" style="left:50.6px;top:387.2px;width:0.7px;height:8px;background:#111;"></div>
<div class="t" style="left:54px;top:386.53px;font-size:7px;color:#e4e4e4;font-weight:bold;">+</div>
<div class="a" style="left:436.6px;top:389px;width:4.8px;height:3.6px;background:#e0e0e0;"></div>
<div class="t" style="left:444.6px;top:389.59px;font-size:4px;color:#ccc;">▾</div>
<div class="a" style="left:0px;top:395.2px;width:449.8px;height:14px;background:#383838;"></div>
<div class="a" style="left:19px;top:397.4px;width:408.4px;height:10.2px;background:#2f2f2f;border:0.6px solid #1f1f1f;border-radius:1px"></div>
<div class="a" style="left:0px;top:409.2px;width:449.8px;height:12.6px;background:#373737;"></div>
<div class="a" style="left:110px;top:411.2px;width:77px;height:9.4px;background:#181818;"></div>
<div class="a" style="left:187px;top:411.2px;width:8.6px;height:9.4px;background:#222;"></div>
<div class="a" style="left:314.8px;top:411.2px;width:77px;height:9.4px;background:#181818;"></div>
<div class="a" style="left:391.8px;top:411.2px;width:8.6px;height:9.4px;background:#222;"></div>
<div class="a" style="left:0px;top:420.6px;width:449.8px;height:1.2px;background:#222;"></div>
<svg width="878" height="430" viewBox="0 0 878 430">
<path d="M0 400.6 h3 v3 h-3z" fill="#e8e8e8"/><path d="M3.4 404.6 l1 1" stroke="#ccc" stroke-width="0.5"/>
<path d="M9 402.4 l2.4 -2 v1.2 h3 v1.6 h-3 v1.2z" fill="#585858"/>
<path d="M21.6 400 h1 v4.4 h4.6 v1 h-5.6z" fill="#9a9a9a"/><rect x="23.2" y="401.6" width="3" height="2.2" fill="#7f8f9f"/>
<circle cx="45.6" cy="401.6" r="2.3" fill="#e8c03a"/><circle cx="48.6" cy="401.4" r="2" fill="#d04030"/><circle cx="47" cy="404.2" r="2.1" fill="#e8e8e8"/><circle cx="44.6" cy="400.2" r="1.2" fill="#4a7ad0"/>
<path d="M422.6 401.6 l1.2 1.4 l1.2 -1.4z" fill="#aaa"/>
<path d="M430.4 402 h3.4 v-1.6 l3 2.4 l-3 2.4 v-1.6 h-3.4z" fill="#e0e0e0"/>
<circle cx="444.2" cy="402.4" r="3.3" fill="#34506e" stroke="#7fa8d8" stroke-width="0.8"/><path d="M442.4 402.4 h3.6" stroke="#9fc0e8" stroke-width="0.7"/>
<!-- node row icons -->
<rect x="57.4" y="411.6" width="8.8" height="9.4" fill="#5b7898"/><path d="M59.4 413.6 h4.4 l-2 2 h2 l-4.4 3.6 l1.6 -3 h-1.6z" fill="#e8e0a0"/>
<circle cx="70.4" cy="414.4" r="1.1" fill="#c080c0"/>
<circle cx="79.4" cy="415.8" r="1.8" fill="#e8d050"/><path d="M77 418.6 h4.6" stroke="#aaa" stroke-width="0.7"/>
<path d="M85.4 413.6 l2 2.6 l2 -2.6" stroke="#e8e8e8" stroke-width="0.9" fill="none"/><circle cx="88.6" cy="417.6" r="1.7" fill="#d04838"/><circle cx="86" cy="417.8" r="1.3" fill="#e8c03a"/>
<path d="M187.6 412.6 h6 l-2.2 3 v3.8 h-1.6 v-3.8z" fill="#e4e4e4"/>
<path d="M234 415 l1.2 1.6 l1.2 -1.6z" fill="#bbb"/>
<path d="M393.6 412.6 h6 l-2.2 3 v3.8 h-1.6 v-3.8z" fill="#e4e4e4"/>
<path d="M404 413.6 h4.6 M404 415.6 h4.6 M404 417.6 h2" stroke="#e0e0e0" stroke-width="0.8"/><path d="M407.6 417 v2.6 h1.6" stroke="#e0e0e0" stroke-width="0.7" fill="none"/>
<circle cx="444" cy="414.6" r="2.8" fill="none" stroke="#d8d8d8" stroke-width="0.7"/>
</svg>
<div class="t" style="left:30px;top:400.86px;font-size:4.8px;color:#c8c8c8;">obj</div>
<div class="t" style="left:54px;top:400.86px;font-size:4.8px;color:#c8c8c8;">geo2</div>
<div class="t" style="left:-4px;top:414.66px;font-size:4.8px;color:#f0f0f0;font-weight:bold;">Node:</div>
<div class="t" style="left:9.6px;top:414.66px;font-size:4.8px;color:#d8d8d8;">solver1</div>
<div class="t" style="left:94px;top:414.69px;font-size:4.6px;color:#a8a8a8;">Group:</div>
<div class="a" style="left:110px;top:411.2px;width:77px;height:9.4px;background:#181818;"></div>
<div class="a" style="left:195.6px;top:411.2px;width:36px;height:9.6px;background:linear-gradient(#4e4e4e,#424242);"></div>
<div class="t" style="left:201.6px;top:414.66px;font-size:4.8px;color:#dcdcdc;">View</div>
<div class="t" style="left:245px;top:414.69px;font-size:4.6px;color:#7c7c7c;">Intrinsics</div>
<div class="t" style="left:290.6px;top:414.69px;font-size:4.6px;color:#d0d0d0;">Attributes:</div>
<div class="a" style="left:314.8px;top:411.2px;width:77px;height:9.4px;background:#181818;"></div>
<div class="t" style="left:443px;top:413.32px;font-size:4.4px;color:#ddd;font-weight:bold;">?</div>
<div class="a" style="left:0px;top:421.8px;width:444.6px;height:7.8px;background:#303030;"></div>
<div class="a" style="left:0px;top:421.8px;width:32px;height:7.8px;background:#2a2a2a;"></div>
<div class="t" style="left:34px;top:424.29px;font-size:4.6px;color:#c8c8c8;">P[x]</div>
<div class="t" style="left:71px;top:424.29px;font-size:4.6px;color:#c8c8c8;">P[y]</div>
<div class="t" style="left:107px;top:424.29px;font-size:4.6px;color:#c8c8c8;">P[z]</div>
<div class="t" style="left:143.6px;top:424.35px;font-size:4.9px;color:#f0f0f0;">pscale</div>
<div class="t" style="left:173.6px;top:424.12px;font-size:4.4px;color:#aaa;">▴</div>
<div class="a" style="left:0px;top:429.8px;width:444.6px;height:7.66px;background:#2e2e2e;"></div>
<div class="a" style="left:0px;top:430.2px;width:31.6px;height:6.9px;background:#202020;"></div>
<div class="t m" style="left:0px;top:432.99px;font-size:4.6px;color:#d0d0d0;">0</div>
<div class="t m" style="left:33.4px;top:433.25px;font-size:4.9px;color:#b8b8b8;">-2.17926</div>
<div class="t m" style="left:70.4px;top:433.25px;font-size:4.9px;color:#b8b8b8;">0.0</div>
<div class="t m" style="left:107px;top:433.25px;font-size:4.9px;color:#b8b8b8;">0.00895</div>
<div class="t m" style="left:143.6px;top:433.25px;font-size:4.9px;color:#b8b8b8;">0.05</div>
<div class="a" style="left:0px;top:437.46000000000004px;width:444.6px;height:7.66px;background:#353535;"></div>
<div class="a" style="left:0px;top:437.86px;width:31.6px;height:6.9px;background:#202020;"></div>
<div class="t m" style="left:0px;top:440.65px;font-size:4.6px;color:#d0d0d0;">1</div>
<div class="t m" style="left:33.4px;top:440.91px;font-size:4.9px;color:#b8b8b8;">2.24567</div>
<div class="t m" style="left:70.4px;top:440.91px;font-size:4.9px;color:#b8b8b8;">0.0</div>
<div class="t m" style="left:107px;top:440.91px;font-size:4.9px;color:#b8b8b8;">2.47098</div>
<div class="t m" style="left:143.6px;top:440.91px;font-size:4.9px;color:#b8b8b8;">0.1</div>
<div class="a" style="left:0px;top:445.12px;width:444.6px;height:7.66px;background:#2e2e2e;"></div>
<div class="a" style="left:0px;top:445.52px;width:31.6px;height:6.9px;background:#202020;"></div>
<div class="t m" style="left:0px;top:448.31px;font-size:4.6px;color:#d0d0d0;">2</div>
<div class="t m" style="left:33.4px;top:448.57px;font-size:4.9px;color:#b8b8b8;">-2.46275</div>
<div class="t m" style="left:70.4px;top:448.57px;font-size:4.9px;color:#b8b8b8;">0.0</div>
<div class="t m" style="left:107px;top:448.57px;font-size:4.9px;color:#b8b8b8;">1.37077</div>
<div class="t m" style="left:143.6px;top:448.57px;font-size:4.9px;color:#b8b8b8;">0.1</div>
<div class="a" style="left:0px;top:452.78000000000003px;width:444.6px;height:7.66px;background:#353535;"></div>
<div class="a" style="left:0px;top:453.18px;width:31.6px;height:6.9px;background:#202020;"></div>
<div class="t m" style="left:0px;top:455.97px;font-size:4.6px;color:#d0d0d0;">3</div>
<div class="t m" style="left:33.4px;top:456.23px;font-size:4.9px;color:#b8b8b8;">1.83214</div>
<div class="t m" style="left:70.4px;top:456.23px;font-size:4.9px;color:#b8b8b8;">0.0</div>
<div class="t m" style="left:107px;top:456.23px;font-size:4.9px;color:#b8b8b8;">0.5665</div>
<div class="t m" style="left:143.6px;top:456.23px;font-size:4.9px;color:#b8b8b8;">0.0</div>
<div class="a" style="left:0px;top:460.44px;width:444.6px;height:7.66px;background:#2e2e2e;"></div>
<div class="a" style="left:0px;top:460.84px;width:31.6px;height:6.9px;background:#202020;"></div>
<div class="t m" style="left:0px;top:463.63px;font-size:4.6px;color:#d0d0d0;">4</div>
<div class="t m" style="left:33.4px;top:463.89px;font-size:4.9px;color:#b8b8b8;">2.43667</div>
<div class="t m" style="left:70.4px;top:463.89px;font-size:4.9px;color:#b8b8b8;">0.0</div>
<div class="t m" style="left:107px;top:463.89px;font-size:4.9px;color:#b8b8b8;">2.01913</div>
<div class="t m" style="left:143.6px;top:463.89px;font-size:4.9px;color:#b8b8b8;">0.15</div>
<div class="a" style="left:0px;top:468.1px;width:444.6px;height:7.66px;background:#353535;"></div>
<div class="a" style="left:0px;top:468.5px;width:31.6px;height:6.9px;background:#202020;"></div>
<div class="t m" style="left:0px;top:471.29px;font-size:4.6px;color:#d0d0d0;">5</div>
<div class="t m" style="left:33.4px;top:471.55px;font-size:4.9px;color:#b8b8b8;">4.77944</div>
<div class="t m" style="left:70.4px;top:471.55px;font-size:4.9px;color:#b8b8b8;">0.0</div>
<div class="t m" style="left:107px;top:471.55px;font-size:4.9px;color:#b8b8b8;">-1.44148</div>
<div class="t m" style="left:143.6px;top:471.55px;font-size:4.9px;color:#b8b8b8;">0.1</div>
<div class="a" style="left:0px;top:475.8px;width:449.8px;height:7px;background:#2e2e2e;"></div>
<div class="a" style="left:32px;top:421.8px;width:0.6px;height:54px;background:#222;"></div>
<div class="a" style="left:105.4px;top:421.8px;width:0.6px;height:54px;background:#222;"></div>
<div class="a" style="left:141.4px;top:421.8px;width:0.6px;height:54px;background:#222;"></div>
<div class="a" style="left:179.4px;top:421.8px;width:0.6px;height:54px;background:#222;"></div>
<div class="a" style="left:444.4px;top:421.8px;width:5.4px;height:55px;background:#272727;"></div>
<div class="a" style="left:444.8px;top:439.9px;width:4.8px;height:6.4px;background:#464646;"></div>
<div class="a" style="left:444.8px;top:462.9px;width:4.8px;height:5.6px;background:#464646;"></div>
<div class="a" style="left:444.8px;top:470.2px;width:4.8px;height:5.6px;background:#464646;"></div>
<div class="a" style="left:0px;top:482.6px;width:878px;height:0.7px;background:#222;"></div>
<svg width="878" height="500" viewBox="0 0 878 500"><path d="M167 428.2 l0.2 5.4 l1.3 -1.2 l1 2 l0.8 -0.4 l-1 -1.9 l1.8 -0.2z" fill="#f8f8f8" stroke="#111" stroke-width="0.3"/></svg>
<div class="a" style="left:0px;top:483.2px;width:878px;height:14.6px;background:#353535;"></div>
<div class="a" style="left:0px;top:497.6px;width:878px;height:15.2px;background:#303030;"></div>
<div class="a" style="left:0px;top:512.6px;width:878px;height:12.4px;background:#1e1e1e;"></div>
<div class="a" style="left:0px;top:512.6px;width:878px;height:2.4px;background:#292929;"></div>
<div class="a" style="left:0px;top:487.6px;width:10.2px;height:10.6px;background:#4a4a4a;"></div>
<div class="a" style="left:11px;top:487.6px;width:10.2px;height:10.6px;background:#4a4a4a;"></div>
<div class="a" style="left:22px;top:487.6px;width:11.2px;height:10.6px;background:#6c84a6;"></div>
<div class="a" style="left:34px;top:487.6px;width:10.6px;height:10.6px;background:#4a4a4a;"></div>
<div class="a" style="left:45.6px;top:487.6px;width:11.4px;height:10.6px;background:#4a4a4a;"></div>
<div class="a" style="left:78.6px;top:487.6px;width:12.6px;height:10.6px;background:#444;"></div>
<svg width="878" height="530" viewBox="0 0 878 530">
<path d="M1.6 490.6 v4.6" stroke="#eee" stroke-width="0.9"/><path d="M5.6 490.4 l-3 2.5 l3 2.5z M8.8 490.4 l-3 2.5 l3 2.5z" fill="#eee"/>
<path d="M18.6 490 l-4.6 2.9 l4.6 2.9z" fill="#f2f2f2"/>
<rect x="25" y="490.2" width="5.2" height="5.4" fill="#f2f2f2"/>
<path d="M37.4 490 l4.6 2.9 l-4.6 2.9z" fill="#f2f2f2"/>
<path d="M47.4 490.4 l3 2.5 l-3 2.5z M50.6 490.4 l3 2.5 l-3 2.5z" fill="#eee"/><path d="M54.8 490.6 v4.6" stroke="#eee" stroke-width="0.9"/>
<path d="M83.6 491 l-2.2 1.9 l2.2 1.9z M84.6 490.8 v4.2 M86.8 491 l2.2 1.9 l-2.2 1.9z" fill="#f0f0f0" stroke="#f0f0f0" stroke-width="0.6"/>
</svg>
<div class="a" style="left:58px;top:487.6px;width:19.6px;height:10.6px;background:#1a1a1a;"></div>
<div class="t m" style="left:59.6px;top:491.66px;font-size:4.8px;color:#bdbdbd;">177</div>
<div class="a" style="left:92.6px;top:483.4px;width:680px;height:14px;background:#363636;"></div>
<div class="a" style="left:92.6px;top:483.2px;width:786px;height:0.6px;background:#505050;"></div>
<div class="a" style="left:93px;top:488.8px;width:399.4px;height:5.2px;background:#1b6fd2;"></div>
<div class="a" style="left:92.8px;top:484.6px;width:0.9px;height:3.6px;background:#e0e0e0;"></div>
<div class="a" style="left:92.6px;top:494.4px;width:680px;height:0.7px;background:#5a5a5a;"></div>
<div class="a" style="left:104.10000000000001px;top:492.6px;width:0.7px;height:2.6px;background:#1b6fd2;"></div>
<div class="a" style="left:117.6px;top:491.4px;width:0.8px;height:4px;background:#1f72d4;"></div>
<div class="a" style="left:131.29999999999998px;top:492.6px;width:0.7px;height:2.6px;background:#1b6fd2;"></div>
<div class="a" style="left:144.79999999999998px;top:489px;width:0.9px;height:6.4px;background:#2f7edc;"></div>
<div class="a" style="left:158.6px;top:492.6px;width:0.7px;height:2.6px;background:#1b6fd2;"></div>
<div class="a" style="left:172.1px;top:491.4px;width:0.8px;height:4px;background:#1f72d4;"></div>
<div class="a" style="left:185.79999999999998px;top:492.6px;width:0.7px;height:2.6px;background:#1b6fd2;"></div>
<div class="a" style="left:199.29999999999998px;top:489px;width:0.9px;height:6.4px;background:#2f7edc;"></div>
<div class="a" style="left:213.1px;top:492.6px;width:0.7px;height:2.6px;background:#1b6fd2;"></div>
<div class="a" style="left:226.6px;top:491.4px;width:0.8px;height:4px;background:#1f72d4;"></div>
<div class="a" style="left:240.29999999999998px;top:492.6px;width:0.7px;height:2.6px;background:#1b6fd2;"></div>
<div class="a" style="left:253.9px;top:489px;width:0.9px;height:6.4px;background:#2f7edc;"></div>
<div class="a" style="left:267.59999999999997px;top:492.6px;width:0.7px;height:2.6px;background:#1b6fd2;"></div>
<div class="a" style="left:281.1px;top:491.4px;width:0.8px;height:4px;background:#1f72d4;"></div>
<div class="a" style="left:294.8px;top:492.6px;width:0.7px;height:2.6px;background:#1b6fd2;"></div>
<div class="a" style="left:308.40000000000003px;top:489px;width:0.9px;height:6.4px;background:#2f7edc;"></div>
<div class="a" style="left:322.09999999999997px;top:492.6px;width:0.7px;height:2.6px;background:#1b6fd2;"></div>
<div class="a" style="left:335.6px;top:491.4px;width:0.8px;height:4px;background:#1f72d4;"></div>
<div class="a" style="left:349.3px;top:492.6px;width:0.7px;height:2.6px;background:#1b6fd2;"></div>
<div class="a" style="left:362.90000000000003px;top:489px;width:0.9px;height:6.4px;background:#2f7edc;"></div>
<div class="a" style="left:376.59999999999997px;top:492.6px;width:0.7px;height:2.6px;background:#1b6fd2;"></div>
<div class="a" style="left:390.1px;top:491.4px;width:0.8px;height:4px;background:#1f72d4;"></div>
<div class="a" style="left:403.9px;top:492.6px;width:0.7px;height:2.6px;background:#1b6fd2;"></div>
<div class="a" style="left:417.40000000000003px;top:489px;width:0.9px;height:6.4px;background:#2f7edc;"></div>
<div class="a" style="left:431.09999999999997px;top:492.6px;width:0.7px;height:2.6px;background:#1b6fd2;"></div>
<div class="a" style="left:444.6px;top:491.4px;width:0.8px;height:4px;background:#1f72d4;"></div>
<div class="a" style="left:458.4px;top:492.6px;width:0.7px;height:2.6px;background:#1b6fd2;"></div>
<div class="a" style="left:471.90000000000003px;top:489px;width:0.9px;height:6.4px;background:#2f7edc;"></div>
<div class="a" style="left:485.59999999999997px;top:492.6px;width:0.7px;height:2.6px;background:#1b6fd2;"></div>
<div class="a" style="left:499.1px;top:491.4px;width:0.8px;height:4px;background:#7c7c7c;"></div>
<div class="a" style="left:512.9000000000001px;top:492.6px;width:0.7px;height:2.6px;background:#5e5e5e;"></div>
<div class="a" style="left:526.4px;top:489px;width:0.9px;height:6.4px;background:#a4a4a4;"></div>
<div class="a" style="left:540.1px;top:492.6px;width:0.7px;height:2.6px;background:#5e5e5e;"></div>
<div class="a" style="left:553.7px;top:491.4px;width:0.8px;height:4px;background:#7c7c7c;"></div>
<div class="a" style="left:567.4000000000001px;top:492.6px;width:0.7px;height:2.6px;background:#5e5e5e;"></div>
<div class="a" style="left:580.9px;top:489px;width:0.9px;height:6.4px;background:#a4a4a4;"></div>
<div class="a" style="left:594.6px;top:492.6px;width:0.7px;height:2.6px;background:#5e5e5e;"></div>
<div class="a" style="left:608.2px;top:491.4px;width:0.8px;height:4px;background:#7c7c7c;"></div>
<div class="a" style="left:621.9000000000001px;top:492.6px;width:0.7px;height:2.6px;background:#5e5e5e;"></div>
<div class="a" style="left:635.4px;top:489px;width:0.9px;height:6.4px;background:#a4a4a4;"></div>
<div class="a" style="left:649.1px;top:492.6px;width:0.7px;height:2.6px;background:#5e5e5e;"></div>
<div class="a" style="left:662.7px;top:491.4px;width:0.8px;height:4px;background:#7c7c7c;"></div>
<div class="a" style="left:676.4000000000001px;top:492.6px;width:0.7px;height:2.6px;background:#5e5e5e;"></div>
<div class="a" style="left:689.9px;top:489px;width:0.9px;height:6.4px;background:#a4a4a4;"></div>
<div class="a" style="left:703.7px;top:492.6px;width:0.7px;height:2.6px;background:#5e5e5e;"></div>
<div class="a" style="left:717.2px;top:491.4px;width:0.8px;height:4px;background:#7c7c7c;"></div>
<div class="a" style="left:730.9000000000001px;top:492.6px;width:0.7px;height:2.6px;background:#5e5e5e;"></div>
<div class="a" style="left:744.4px;top:489px;width:0.9px;height:6.4px;background:#a4a4a4;"></div>
<div class="a" style="left:758.2px;top:492.6px;width:0.7px;height:2.6px;background:#5e5e5e;"></div>
<div class="a" style="left:771.7px;top:491.4px;width:0.8px;height:4px;background:#7c7c7c;"></div>
<div class="t" style="left:145.83759999999998px;top:485.82px;font-size:3.8px;color:#a8a8a8;">24</div>
<div class="t" style="left:200.3464px;top:485.82px;font-size:3.8px;color:#a8a8a8;">48</div>
<div class="t" style="left:254.8552px;top:485.82px;font-size:3.8px;color:#a8a8a8;">72</div>
<div class="t" style="left:309.36400000000003px;top:485.82px;font-size:3.8px;color:#a8a8a8;">96</div>
<div class="t" style="left:363.8728px;top:485.82px;font-size:3.8px;color:#a8a8a8;">120</div>
<div class="t" style="left:418.3816px;top:485.82px;font-size:3.8px;color:#a8a8a8;">144</div>
<div class="t" style="left:472.8904px;top:485.82px;font-size:3.8px;color:#a8a8a8;">168</div>
<div class="t" style="left:527.3992px;top:485.82px;font-size:3.8px;color:#a8a8a8;">192</div>
<div class="t" style="left:581.908px;top:485.82px;font-size:3.8px;color:#a8a8a8;">216</div>
<div class="t" style="left:636.4168px;top:485.82px;font-size:3.8px;color:#a8a8a8;">240</div>
<div class="t" style="left:690.9256px;top:485.82px;font-size:3.8px;color:#a8a8a8;">264</div>
<div class="t" style="left:745.4344px;top:485.82px;font-size:3.8px;color:#a8a8a8;">288</div>
<div class="t" style="left:94px;top:485.82px;font-size:3.8px;color:#a8a8a8;">1</div>
<div class="a" style="left:486.6px;top:484.4px;width:11.2px;height:7px;background:#050505;border:0.5px solid #c8c8c8"></div>
<div class="t" style="left:488px;top:486.49px;font-size:4.6px;color:#fff;font-weight:bold;">177</div>
<div class="a" style="left:491.8px;top:491.4px;width:0.8px;height:3px;background:#fff;"></div>
<div class="a" style="left:0px;top:502.4px;width:10.4px;height:9.6px;background:#4a4a4a;"></div>
<div class="a" style="left:11.6px;top:502.4px;width:10.4px;height:9.6px;background:#4a4a4a;"></div>
<div class="a" style="left:23px;top:502.4px;width:10.4px;height:9.6px;background:#4a4a4a;"></div>
<div class="a" style="left:34.2px;top:502.4px;width:11px;height:9.6px;background:#6c84a6;"></div>
<div class="a" style="left:46px;top:502.4px;width:10.4px;height:9.6px;background:#4a4a4a;"></div>
<div class="a" style="left:58.6px;top:502.4px;width:9.6px;height:9.6px;background:#404040;"></div>
<div class="a" style="left:69px;top:502.4px;width:9.6px;height:9.6px;background:#404040;"></div>
<svg width="878" height="530" viewBox="0 0 878 530">
<rect x="2" y="504.6" width="4.6" height="5" fill="#e0e0e0"/><circle cx="7" cy="509" r="1.6" fill="#1a1a1a" stroke="#ddd" stroke-width="0.5"/>
<path d="M14.6 504.6 q-1.4 2.6 0 5.2 M19 504.6 q1.4 2.6 0 5.2" stroke="#e0e0e0" stroke-width="0.8" fill="none"/><circle cx="16.8" cy="507.2" r="1.4" fill="#ddd"/>
<path d="M24.6 509.6 h7.6 M26 508.4 q2.4 -4.4 4.8 0" stroke="#f0f0f0" stroke-width="0.9" fill="none"/>
<circle cx="39.6" cy="507.2" r="3" fill="#1c2c44" stroke="#f0f0f0" stroke-width="0.8"/><path d="M39.6 505.4 v2 l1.2 0.8" stroke="#fff" stroke-width="0.6" fill="none"/>
<path d="M49 505 q-1.2 2.2 0 4.4 M53.4 505 q1.2 2.2 0 4.4" stroke="#c8c8c8" stroke-width="0.7" fill="none"/><path d="M51.2 505.4 v3.6" stroke="#c8c8c8" stroke-width="0.8"/>
<path d="M62 505.6 l2.4 1.6 l-2.4 1.6z M72.6 505.6 l2.4 1.6 l-2.4 1.6z" fill="#5c5c5c"/>
<path d="M130.6 503.6 l2.2 3.6 l-2.2 3.6z" fill="#d0d0d0"/>
<path d="M736 503.6 l-2.2 3.6 l2.2 3.6z" fill="#d0d0d0"/>
<path d="M780.6 500.6 l3.2 -5.2" stroke="#5a5a5a" stroke-width="0.9"/><circle cx="784" cy="495" r="1.3" fill="none" stroke="#5a5a5a" stroke-width="0.7"/>
<path d="M793 496.4 l1.3 1.6 l1.3 -1.6z" fill="#bbb"/>
<rect x="802.4" y="488.4" width="7.6" height="7.6" fill="#2a2a2a"/><path d="M803.6 490.4 h5.4 M803.6 492.4 h5.4 M803.6 494.4 h5.4 M805 489.4 v6 M807.6 489.4 v6" stroke="#e0e0e0" stroke-width="0.6"/>
<rect x="802.4" y="500.2" width="7.6" height="7.6" fill="#0c0c0c"/><path d="M803.4 505.6 l2 -2.4 l1.6 1.6 l2 -2.6" stroke="#e8903a" stroke-width="0.8" fill="none"/>
<ellipse cx="760.8" cy="518.6" rx="3.4" ry="2.6" fill="#9a9a9a"/><path d="M759 520.6 l-1.4 1.8 l2.8 -1z" fill="#9a9a9a"/>
<path d="M826 517 a2.4 2.4 0 1 0 2.4 2.4" stroke="#5a5a5a" stroke-width="0.8" fill="none"/>
</svg>
<div class="t m" style="left:94.4px;top:505.66px;font-size:4.8px;color:#d8d8d8;">1</div>
<div class="a" style="left:109.6px;top:502.6px;width:19.6px;height:9.4px;background:#1a1a1a;"></div>
<div class="t m" style="left:112.6px;top:505.66px;font-size:4.8px;color:#d8d8d8;">1</div>
<div class="a" style="left:131.6px;top:506.6px;width:603px;height:1px;background:#9c9c9c;"></div>
<div class="a" style="left:735.8px;top:502.6px;width:16.6px;height:9.4px;background:#0c0c0c;"></div>
<div class="t m" style="left:737.6px;top:505.66px;font-size:4.8px;color:#e0e0e0;">300</div>
<div class="a" style="left:755.4px;top:502.6px;width:17.8px;height:9.4px;background:#1a1a1a;"></div>
<div class="t m" style="left:757.4px;top:505.66px;font-size:4.8px;color:#d8d8d8;">300</div>
<div class="a" style="left:812.6px;top:487.4px;width:66px;height:9.4px;background:linear-gradient(#505050,#444444);"></div>
<div class="t" style="left:820.6px;top:490.61px;font-size:4.5px;color:#dcdcdc;">0 keys, 0/0 channels</div>
<div class="t" style="left:873.6px;top:489.79px;font-size:4px;color:#ccc;">▾</div>
<div class="a" style="left:812.6px;top:499.6px;width:59.4px;height:9.2px;background:linear-gradient(#505050,#444444);"></div>
<div class="t" style="left:818.6px;top:502.61px;font-size:4.5px;color:#dcdcdc;">Key All Channels</div>
<div class="t" style="left:873.6px;top:499.83px;font-size:5px;color:#aaa;">⬍</div>
<div class="a" style="left:766.6px;top:514.6px;width:47.2px;height:8.8px;background:linear-gradient(#4a4a4a,#3e3e3e);"></div>
<div class="t" style="left:773px;top:517.52px;font-size:4.4px;color:#c8c8c8;">/obj/geo2/solve...</div>
<div class="t" style="left:815.6px;top:515.23px;font-size:5px;color:#999;">⬍</div>
<div class="a" style="left:831px;top:514.6px;width:41px;height:8.8px;background:linear-gradient(#4a4a4a,#3e3e3e);"></div>
<div class="t" style="left:840px;top:517.52px;font-size:4.4px;color:#c8c8c8;">Auto Update</div>
<div class="t" style="left:873.6px;top:515.23px;font-size:5px;color:#999;">⬍</div>
</div>
<div class="a" style="left:0px;top:0px;width:878px;height:44px;background:#000;"></div>
<div class="a" style="left:0px;top:524.6px;width:878px;height:73px;background:#000;"></div>
<div class="t" style="left:32px;top:12.5px;font-size:16.2px;color:#fff;font-weight:bold;">24_以指定步幅控制属性增...</div>
<svg width="878" height="44" viewBox="0 0 878 44" fill="none" stroke="#fff" stroke-width="1.7" stroke-linecap="round" stroke-linejoin="round">
<!-- share -->
<circle cx="382.3" cy="11.6" r="3"/><circle cx="372.3" cy="17" r="3"/><circle cx="382.3" cy="22.4" r="3"/>
<path d="M375 15.6 L379.6 13.1 M375 18.4 L379.6 20.9"/>
<!-- download -->
<path d="M421.2 8.6 V19.6 M416.2 15 L421.2 20 L426.2 15 M413.4 19.5 V22.2 Q413.4 25 416.2 25 H426.2 Q429 25 429 22.2 V19.5"/>
<!-- pip -->
<path d="M521.2 23.6 H518 Q514.6 23.6 514.6 20.2 V12.4 Q514.6 9 518 9 H527.8 Q531.2 9 531.2 12.4 V15.4"/>
<rect x="523.6" y="18.4" width="8" height="6.2" rx="1.6"/>
<path d="M518.4 12.2 L522.6 16 M519.2 16.2 H522.8 V12.8"/>
<!-- pin -->
<path d="M575.2 8 V26.2 M575.2 11.2 H567 Q564 11.2 564 14.2 V19.8 Q564 22.8 567 22.8 H575.2 M564 17 H559.2"/>
</svg>
<svg width="878" height="44" viewBox="0 0 878 44"><circle cx="458.3" cy="17" r="1.9" fill="#fff"/><circle cx="465.3" cy="17" r="1.9" fill="#fff"/><circle cx="472.3" cy="17" r="1.9" fill="#fff"/><rect x="495" y="10" width="1" height="13.5" fill="#3a3a3a"/></svg>
<div class="a" style="left:617.2px;top:8.8px;width:19.8px;height:19.8px;background:#3b3b43;border-radius:50%"></div>
<svg width="878" height="44" viewBox="0 0 878 44" stroke="#dcdcdc" stroke-width="1.3" stroke-linecap="round"><path d="M623.6 15.2 L630.6 22.2 M630.6 15.2 L623.6 22.2"/></svg>
<div class="a" style="left:645px;top:4px;width:107.6px;height:30.2px;background:#0a0a29;border-radius:15.2px;border:1px solid #20204a"></div>
<div class="t" style="left:657.3px;top:11.8px;font-size:14px;color:#fff;">提炼视频大意</div>
<div class="a" style="left:772.5px;top:3.2px;width:89px;height:32.2px;background:radial-gradient(ellipse 60px 40px at 8px 20px,#7a9ad8 0%,#5b74c4 45%,rgba(70,80,180,0) 100%),linear-gradient(90deg,#4a56b0 0%,#4a4cac 45%,#3e3e9e 80%,#34348e 100%);border-radius:17px;"></div>
<svg width="878" height="44" viewBox="0 0 878 44">
<defs><clipPath id="avc"><rect x="772" y="-5" width="90" height="40.4" rx="17"/></clipPath></defs>
<g clip-path="url(#avc)">
<path d="M792 38 C791 31 794 28 801 28 C808 28 811 31 810.6 38 Z" fill="#eef1f8"/>
<path d="M800.6 -3.4 C809 -3 822.4 7 821.7 17.5 C821 25.5 812 29.6 801 29.6 C790 29.6 781 25.5 780.3 17.5 C779.6 7 792 -3 800.6 -3.4 Z" fill="#f5f6fa"/>
<path d="M801.5 9.6 C808 9.4 813.6 12 813.4 17.4 C813.2 22 808 24 801.5 24 C795 24 789.8 22 789.6 17.4 C789.4 12 795 9.8 801.5 9.6 Z" fill="#fbdad2"/>
<ellipse cx="793" cy="19.3" rx="3.3" ry="2.8" fill="#f6a3ab"/><ellipse cx="809.4" cy="19.3" rx="3.3" ry="2.8" fill="#f6a3ab"/>
<ellipse cx="798.2" cy="16" rx="0.9" ry="1.2" fill="#2a1a1a"/><ellipse cx="805" cy="16" rx="0.9" ry="1.2" fill="#2a1a1a"/>
<path d="M800.4 19.4 Q801.6 20.8 802.8 19.4" stroke="#2a1a1a" stroke-width="0.6" fill="none" stroke-linecap="round"/>
<ellipse cx="801" cy="33.4" rx="2.2" ry="1.2" fill="#9fc0ea"/><ellipse cx="801.4" cy="34" rx="1.2" ry="0.7" fill="#f0a0b8"/>
</g></svg>
<div class="t" style="left:828px;top:13.6px;font-size:12.2px;color:#fff;">Hi</div>
<svg width="878" height="44" viewBox="0 0 878 44" fill="none" stroke="#fff" stroke-width="1.5" stroke-linecap="round" stroke-linejoin="round"><path d="M846.8 16.9 L850.2 20 L846.8 23.1"/></svg>
<div class="t" style="left:805px;top:37.02px;font-size:6.4px;color:#e6e8ee;letter-spacing:2.2px;transform:scaleX(1.33);transform-origin:0 0;text-shadow:0 0 1px #8890a8;">LOGIC·VFX</div>
<div class="a" style="left:861.3px;top:265px;width:20px;height:71.5px;background:#131313;border-radius:9px 0 0 9px"></div>
<svg width="878" height="597" viewBox="0 0 878 597" fill="none" stroke="#fff" stroke-width="2" stroke-linecap="round" stroke-linejoin="round"><path d="M876.2 295.6 L870.6 301.2 L876.2 306.8"/></svg>
<div class="t" style="left:1px;top:526.65px;font-size:6.2px;color:#f0f0f0;letter-spacing:0.1px;transform:scaleX(1.2);transform-origin:0 0;font-weight:bold;">LAO GAO</div>
<div class="t" style="left:7.5px;top:535.6px;font-size:11.4px;color:#fff;letter-spacing:-0.95px;">36:01</div>
<div class="t" style="left:836.5px;top:535.6px;font-size:11.4px;color:#fff;letter-spacing:-0.95px;">53:11</div>
<div class="a" style="left:47px;top:539px;width:779.5px;height:2px;background:#5a5a5a;"></div>
<div class="a" style="left:47px;top:539px;width:738px;height:2px;background:#0ca2f8;"></div>
<svg width="878" height="597" viewBox="0 0 878 597">
<path d="M24.7 565.7 L38.8 575 L24.7 584.3 Z" fill="#fff" stroke="#fff" stroke-width="5.2" stroke-linejoin="round"/>
<rect x="78.6" y="567.8" width="2.6" height="14.6" rx="0.6" fill="#fff"/>
<path d="M92.1 569.5 L84.6 575.1 L92.1 580.7 Z" fill="#fff" stroke="#fff" stroke-width="2.4" stroke-linejoin="round"/>
<rect x="134.7" y="567.8" width="2.6" height="14.6" rx="0.6" fill="#6e6e6e"/>
<path d="M123.7 569.5 L131.4 575.1 L123.7 580.7 Z" fill="#6e6e6e" stroke="#6e6e6e" stroke-width="2.4" stroke-linejoin="round"/>
<g fill="none" stroke="#fff" stroke-width="1.9" stroke-linecap="round" stroke-linejoin="round">
<path d="M701.6 566.4 H713.6 M701.6 572.8 H713.6 M701.6 579.2 H713.6"/>
<path d="M697 566.4 h0.1 M697 572.8 h0.1 M697 579.2 h0.1" stroke-width="2.4"/>
<path d="M749.2 565.3 H757.2 L761.1 572.9 L757.2 580.5 H749.2 L745.3 572.9 Z" stroke-width="2.1"/>
<circle cx="753.2" cy="572.9" r="3.7"/>
<path d="M800.8 565.4 V580.8 L795.6 577 H792.8 Q791.8 577 791.8 576 V570.2 Q791.8 569.2 792.8 569.2 H795.6 Z"/>
<path d="M804.4 569.6 Q806.8 573.1 804.4 576.6 M807.4 566.2 Q812.4 573.1 807.4 580"/>
<path d="M837 569.2 V567 Q837 564.8 839.2 564.8 H841.6 M848.8 564.8 H851.2 Q853.4 564.8 853.4 567 V569.2 M853.4 576.6 V578.8 Q853.4 581 851.2 581 H848.8 M841.6 581 H839.2 Q837 581 837 578.8 V576.6"/>
</g></svg>
<div class="t" style="left:488px;top:567px;font-size:14px;color:#fff;">倍速</div>
<div class="t" style="left:539px;top:567px;font-size:14px;color:#f2dcb4;">超清</div>
<div class="t" style="left:589.5px;top:567px;font-size:14px;color:#fff;">字幕</div>
<div class="t" style="left:641px;top:567px;font-size:14px;color:#fff;">查找</div>
<div class="a" style="left:553px;top:553.7px;width:31px;height:14.3px;background:#493530;border-radius:7.2px;border:0.7px solid #6e544a"></div>
<div class="t" style="left:558.4px;top:556.1px;font-size:10px;color:#f0d6b0;font-weight:bold;font-style:italic;letter-spacing:-0.8px;">SVIP</div>
<div class="a" style="left:655px;top:553.7px;width:31px;height:14.3px;background:#493530;border-radius:7.2px;border:0.7px solid #6e544a"></div>
<div class="t" style="left:660.4px;top:556.1px;font-size:10px;color:#f0d6b0;font-weight:bold;font-style:italic;letter-spacing:-0.8px;">SVIP</div>
</div></body></html>
